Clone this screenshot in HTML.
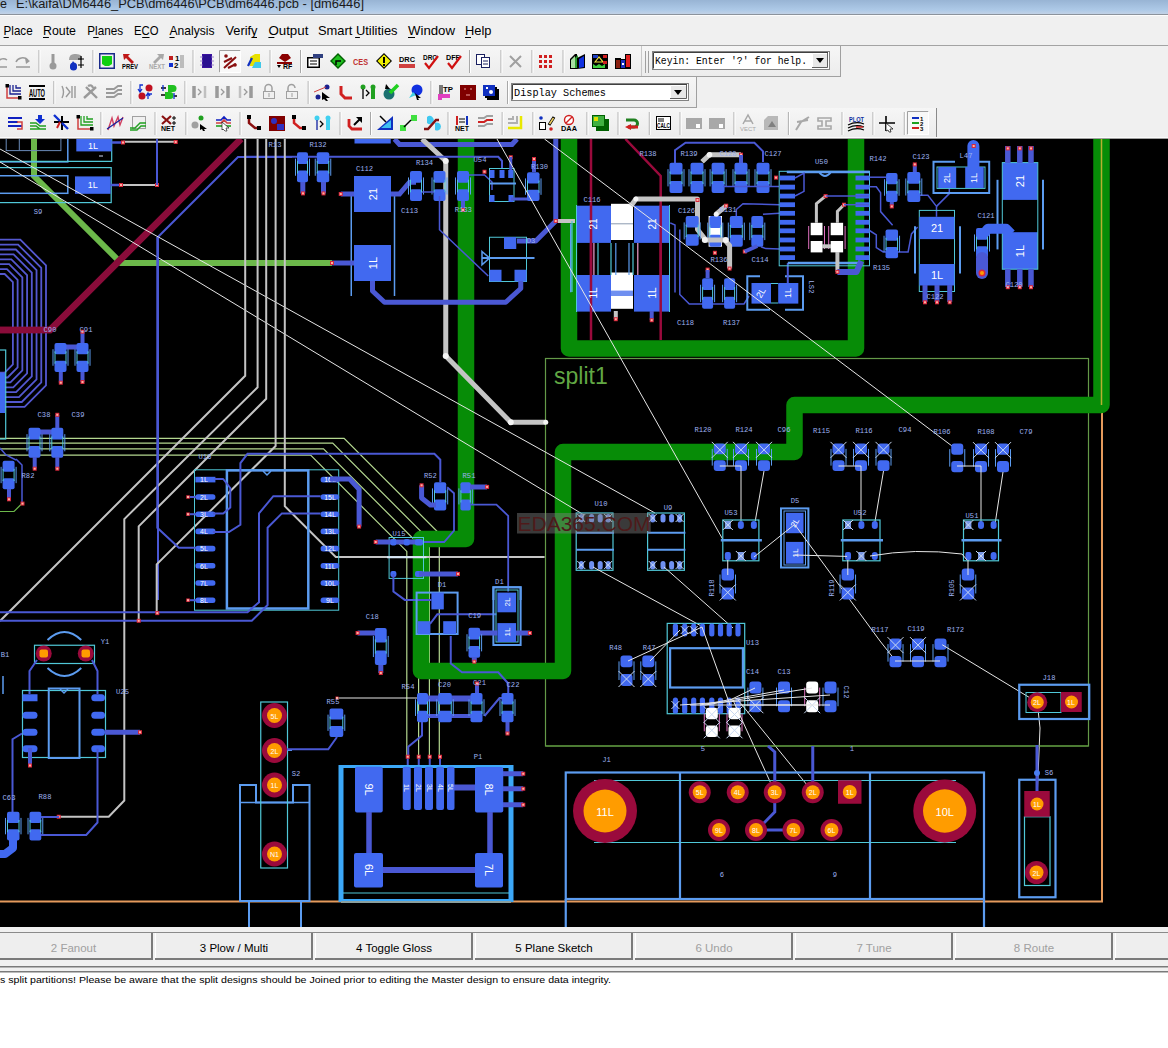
<!DOCTYPE html><html><head><meta charset="utf-8"><style>html,body{margin:0;padding:0;background:#fff;overflow:hidden}svg{display:block}</style></head><body>
<svg width="1168" height="1048" viewBox="0 0 1168 1048">
<defs><linearGradient id="tg" x1="0" y1="0" x2="0" y2="1"><stop offset="0" stop-color="#98b4d4"/><stop offset="0.7" stop-color="#adc9e7"/><stop offset="1" stop-color="#c2d2e6"/></linearGradient><linearGradient id="tb" x1="0" y1="0" x2="0" y2="1"><stop offset="0" stop-color="#f6f6f6"/><stop offset="1" stop-color="#ececec"/></linearGradient></defs>
<rect x="0" y="0" width="1168" height="14" fill="url(#tg)"/>
<rect x="0" y="14" width="1168" height="1" fill="#8c939c"/>
<rect x="0" y="15" width="1168" height="1" fill="#fdfdfd"/>
<text x="0" y="7.5" font-family='"Liberation Sans", sans-serif' font-size="12.5" fill="#1a1a1a">e</text>
<text x="16" y="7.5" font-family='"Liberation Sans", sans-serif' font-size="12.5" fill="#1a1a1a" textLength="348" lengthAdjust="spacingAndGlyphs">E:\kaifa\DM6446_PCB\dm6446\PCB\dm6446.pcb - [dm6446]</text>
<rect x="0" y="16" width="1168" height="29" fill="#f0f0f0"/>
<rect x="0" y="45" width="1168" height="1" fill="#a3a3a3"/>
<text x="3.6" y="35.3" font-family='"Liberation Sans", sans-serif' font-size="13" fill="#000" textLength="29" lengthAdjust="spacingAndGlyphs">Place</text>
<rect x="3.6" y="37" width="5.2" height="1" fill="#000"/>
<text x="43" y="35.3" font-family='"Liberation Sans", sans-serif' font-size="13" fill="#000" textLength="33" lengthAdjust="spacingAndGlyphs">Route</text>
<rect x="43.0" y="37" width="5.9" height="1" fill="#000"/>
<text x="87.3" y="35.3" font-family='"Liberation Sans", sans-serif' font-size="13" fill="#000" textLength="35.7" lengthAdjust="spacingAndGlyphs">Planes</text>
<rect x="93.2" y="37" width="5.4" height="1" fill="#000"/>
<text x="134" y="35.3" font-family='"Liberation Sans", sans-serif' font-size="13" fill="#000" textLength="24.5" lengthAdjust="spacingAndGlyphs">ECO</text>
<rect x="142.2" y="37" width="7.3" height="1" fill="#000"/>
<text x="169.5" y="35.3" font-family='"Liberation Sans", sans-serif' font-size="13" fill="#000" textLength="45" lengthAdjust="spacingAndGlyphs">Analysis</text>
<rect x="169.5" y="37" width="5.1" height="1" fill="#000"/>
<text x="225.5" y="35.3" font-family='"Liberation Sans", sans-serif' font-size="13" fill="#000" textLength="32" lengthAdjust="spacingAndGlyphs">Verify</text>
<rect x="252.2" y="37" width="4.8" height="1" fill="#000"/>
<text x="268.4" y="35.3" font-family='"Liberation Sans", sans-serif' font-size="13" fill="#000" textLength="40" lengthAdjust="spacingAndGlyphs">Output</text>
<rect x="268.4" y="37" width="6.0" height="1" fill="#000"/>
<text x="318" y="35.3" font-family='"Liberation Sans", sans-serif' font-size="13" fill="#000" textLength="79.5" lengthAdjust="spacingAndGlyphs">Smart Utilities</text>
<rect x="355.1" y="37" width="4.8" height="1" fill="#000"/>
<text x="408" y="35.3" font-family='"Liberation Sans", sans-serif' font-size="13" fill="#000" textLength="47" lengthAdjust="spacingAndGlyphs">Window</text>
<rect x="408.0" y="37" width="7.0" height="1" fill="#000"/>
<text x="465" y="35.3" font-family='"Liberation Sans", sans-serif' font-size="13" fill="#000" textLength="26.5" lengthAdjust="spacingAndGlyphs">Help</text>
<rect x="465.0" y="37" width="6.0" height="1" fill="#000"/>
<rect x="0" y="46" width="1168" height="93" fill="#f0f0f0"/>
<rect x="0" y="46" width="641" height="30" fill="url(#tb)"/>
<rect x="642" y="46" width="199" height="30" fill="url(#tb)"/>
<rect x="0" y="77" width="697" height="30" fill="url(#tb)"/>
<rect x="0" y="108" width="936" height="29" fill="url(#tb)"/>
<rect x="0" y="76" width="841" height="1" fill="#a0a0a0"/>
<rect x="641" y="46" width="1" height="30" fill="#c8c8c8"/><rect x="840" y="46" width="1" height="30" fill="#a0a0a0"/>
<rect x="0" y="107" width="697" height="1" fill="#a0a0a0"/>
<rect x="696" y="77" width="1" height="30" fill="#a0a0a0"/>
<rect x="936" y="108" width="1" height="29" fill="#8a8a8a"/>
<rect x="0" y="137" width="1168" height="1" fill="#fbfbfb"/><rect x="0" y="138" width="1168" height="1" fill="#a0a0a0"/>
<path d="M-2 62 A6 6 0 0 1 7 60" fill="none" stroke="#9a9a9a" stroke-width="1.5"/>
<path d="M0 67 H7" fill="none" stroke="#9a9a9a" stroke-width="1.5"/>
<path d="M16 62 A7 6 0 0 1 28 60" fill="none" stroke="#9a9a9a" stroke-width="1.5"/>
<path d="M25 58 L30 61 L26 64Z" fill="#9a9a9a"/>
<path d="M16 67 H30" fill="none" stroke="#9a9a9a" stroke-width="1.5"/>
<rect x="38.5" y="50" width="1" height="23" fill="#a8a8a8"/><rect x="39.5" y="50" width="1" height="23" fill="#ffffff"/>
<path d="M53 54 V63" fill="none" stroke="#9a9a9a" stroke-width="3"/>
<circle cx="53" cy="66" r="3.5" fill="#9a9a9a"/>
<path d="M69 60 Q69 53 76 54 Q83 54 82 60Z" fill="#a0a0a0"/>
<path d="M73 61 L70 67 A3.5 3.5 0 0 0 77 67 Z" fill="#1030c0"/>
<circle cx="73.5" cy="66" r="3.5" fill="#1030c0"/>
<path d="M78 59 H84 M81 56 V62 M78 65 H84 M81 62 V68" fill="none" stroke="#000" stroke-width="1.2"/>
<rect x="92.5" y="50" width="1" height="23" fill="#a8a8a8"/><rect x="93.5" y="50" width="1" height="23" fill="#ffffff"/>
<rect x="99" y="53" width="16" height="16" fill="#1a2a8a"/>
<rect x="100.5" y="54.5" width="13" height="13" fill="#f0f0f0"/>
<path d="M102 56 H112 V64 L109 66 H105 L102 64Z" fill="#10d010"/>
<path d="M123 54 L130 54 L128 56 L134 62 L132 64 L126 58 L124 60Z" fill="#c01818"/>
<text x="122" y="69" font-family='"Liberation Sans", sans-serif' font-size="6.5" fill="#000" text-anchor="start" font-weight="bold" textLength="16" lengthAdjust="spacingAndGlyphs">PREV</text>
<path d="M164 54 L157 54 L159 56 L153 62 L155 64 L161 58 L163 60Z" fill="#a8a8a8"/>
<text x="149" y="69" font-family='"Liberation Sans", sans-serif' font-size="6.5" fill="#a8a8a8" text-anchor="start" font-weight="bold" textLength="16" lengthAdjust="spacingAndGlyphs">NEXT</text>
<rect x="169" y="56" width="4" height="4" fill="#c02020"/>
<rect x="169" y="63" width="4" height="4" fill="#1030d0"/>
<text x="175" y="61" font-family='"Liberation Sans", sans-serif' font-size="8" fill="#000" text-anchor="start" font-weight="bold">1</text>
<text x="174" y="68" font-family='"Liberation Sans", sans-serif' font-size="8" fill="#000" text-anchor="start" font-weight="bold">2</text>
<path d="M181 55 V68 M183 55 V68" fill="none" stroke="#888" stroke-width="1"/>
<rect x="192.6" y="50" width="1" height="23" fill="#a8a8a8"/><rect x="193.6" y="50" width="1" height="23" fill="#ffffff"/>
<rect x="202" y="54" width="10" height="14" fill="#3a10a0"/>
<path d="M200 57 H214 M200 61 H214 M200 65 H214" fill="none" stroke="#8870c0" stroke-width="0.8"/>
<rect x="203" y="55" width="8" height="12" fill="#2a1090"/>
<rect x="219" y="50" width="22" height="23" fill="#f8f8f8"/>
<path d="M219.5 72.5 V50.5 H240.5" fill="none" stroke="#a0a0a0" stroke-width="1"/>
<path d="M219.5 72.5 H240.5 V50.5" fill="none" stroke="#ffffff" stroke-width="1"/>
<path d="M224 68 L236 57 M224 62 L232 58 M228 68 L236 64" fill="none" stroke="#8a1010" stroke-width="2"/>
<circle cx="226" cy="56" r="1.8" fill="#8a1010"/>
<circle cx="235" cy="65" r="1.8" fill="#8a1010"/>
<path d="M250 57 L255 54 H260 V63 L255 66 H250Z" fill="#e8e000"/>
<path d="M255 62 L261 62 L261 68 L252 68Z" fill="#40c8e8"/>
<path d="M248 66 L252 58" fill="none" stroke="#1030c0" stroke-width="2.2"/>
<rect x="269.6" y="50" width="1" height="23" fill="#a8a8a8"/><rect x="270.6" y="50" width="1" height="23" fill="#ffffff"/>
<path d="M279 58 L282 54 H288 L291 58 L285 62Z" fill="#8a0000"/>
<path d="M277 63 H292" fill="none" stroke="#8a0000" stroke-width="2"/>
<text x="283" y="69" font-family='"Liberation Sans", sans-serif' font-size="7" fill="#000" text-anchor="start" font-weight="bold">RF</text>
<path d="M277 65 L281 65 L279 68Z" fill="#000"/>
<rect x="300" y="50" width="1" height="23" fill="#a8a8a8"/><rect x="301" y="50" width="1" height="23" fill="#ffffff"/>
<rect x="307" y="57" width="13" height="11" fill="#000"/>
<rect x="308.5" y="58.5" width="10" height="8" fill="#fff"/>
<path d="M310 61 H317 M310 64 H317" fill="none" stroke="#000" stroke-width="1"/>
<rect x="313" y="54" width="10" height="4" fill="#304080"/>
<path d="M338 53 L346 61 L338 69 L330 61Z" fill="#006000"/>
<path d="M338 55 L344 61 L338 67 L332 61Z" fill="#20c020"/>
<path d="M336 65 V61 H341" fill="none" stroke="#000" stroke-width="1.5"/>
<text x="353" y="65" font-family='"Liberation Sans", sans-serif' font-size="9" fill="#c03030" text-anchor="start" font-weight="bold" textLength="15" lengthAdjust="spacingAndGlyphs">CES</text>
<path d="M384 53 L392 61 L384 69 L376 61Z" fill="#000"/>
<path d="M384 54.5 L390.5 61 L384 67.5 L377.5 61Z" fill="#f0f000"/>
<rect x="383" y="57" width="2" height="6" fill="#000"/>
<rect x="383" y="64" width="2" height="2" fill="#000"/>
<text x="399" y="62" font-family='"Liberation Sans", sans-serif' font-size="8" fill="#000" text-anchor="start" font-weight="bold" textLength="16" lengthAdjust="spacingAndGlyphs">DRC</text>
<rect x="399" y="64" width="16" height="4" fill="#d04040"/>
<text x="423" y="60" font-family='"Liberation Sans", sans-serif' font-size="6.5" fill="#000" text-anchor="start" font-weight="bold" textLength="14" lengthAdjust="spacingAndGlyphs">DRC</text>
<path d="M425 63 L429 68 L438 56" fill="none" stroke="#d01010" stroke-width="2.2"/>
<text x="446" y="60" font-family='"Liberation Sans", sans-serif' font-size="6.5" fill="#000" text-anchor="start" font-weight="bold" textLength="14" lengthAdjust="spacingAndGlyphs">DFF</text>
<path d="M448 63 L452 68 L461 56" fill="none" stroke="#d01010" stroke-width="2.2"/>
<rect x="469" y="50" width="1" height="23" fill="#a8a8a8"/><rect x="470" y="50" width="1" height="23" fill="#ffffff"/>
<rect x="476" y="54" width="9" height="11" fill="#1a2060"/>
<rect x="477" y="55" width="7" height="9" fill="#fff"/>
<rect x="481" y="57" width="9" height="11" fill="#1a2060"/>
<rect x="482" y="58" width="7" height="9" fill="#fff"/>
<path d="M483 61 H488 M483 64 H488" fill="none" stroke="#1a2060" stroke-width="1"/>
<rect x="500.5" y="50" width="1" height="23" fill="#a8a8a8"/><rect x="501.5" y="50" width="1" height="23" fill="#ffffff"/>
<path d="M510 56 L521 67 M521 56 L510 67" fill="none" stroke="#a0a0a0" stroke-width="2"/>
<rect x="531.5" y="50" width="1" height="23" fill="#a8a8a8"/><rect x="532.5" y="50" width="1" height="23" fill="#ffffff"/>
<rect x="539" y="55" width="3" height="3" fill="#d02020"/>
<rect x="539" y="60" width="3" height="3" fill="#d02020"/>
<rect x="539" y="65" width="3" height="3" fill="#d02020"/>
<rect x="544" y="55" width="3" height="3" fill="#d02020"/>
<rect x="544" y="60" width="3" height="3" fill="#d02020"/>
<rect x="544" y="65" width="3" height="3" fill="#d02020"/>
<rect x="549" y="55" width="3" height="3" fill="#d02020"/>
<rect x="549" y="60" width="3" height="3" fill="#d02020"/>
<rect x="549" y="65" width="3" height="3" fill="#d02020"/>
<rect x="562.6" y="50" width="1" height="23" fill="#a8a8a8"/><rect x="563.6" y="50" width="1" height="23" fill="#ffffff"/>
<path d="M570 59 L575 54 H577 V69 H570Z" fill="#000"/>
<path d="M571 60 L575 56 V68 H571Z" fill="#a8e0a0"/>
<path d="M575 58 L578 55 V68 H575Z" fill="#30a030"/>
<path d="M577 58 L585 54 V68 L577 69Z" fill="#000"/>
<path d="M579 59 L584 56 V67 L579 68Z" fill="#1030e0"/>
<rect x="592" y="54" width="16" height="15" fill="#000"/>
<path d="M593 64 L596 66 L599 64 L602 66 L605 64 V68 H593Z" fill="#40d040"/>
<path d="M595 62 L599 57 L603 62 Z" fill="none" stroke="#f0e040" stroke-width="1.2"/>
<rect x="603" y="55" width="4" height="3" fill="#d02020"/>
<rect x="603" y="61" width="4" height="3" fill="#d02020"/>
<rect x="593" y="55" width="5" height="3" fill="#2040c0"/>
<rect x="615" y="58" width="6" height="11" fill="#000"/>
<rect x="616" y="60" width="4" height="8" fill="#8a2010"/>
<rect x="620" y="59" width="6" height="10" fill="#000"/>
<rect x="621" y="60" width="4" height="8" fill="#1a30c0"/>
<rect x="625" y="54" width="6" height="15" fill="#000"/>
<rect x="626" y="55" width="4" height="12" fill="#e02020"/>
<rect x="622" y="63" width="2" height="2" fill="#fff"/>
<path d="M645.5 51 V73 M648.5 51 V73" fill="none" stroke="#a0a0a0" stroke-width="1"/>
<rect x="652" y="51" width="178" height="19" fill="#828282"/>
<rect x="653" y="52" width="176" height="17" fill="#ffffff"/>
<path d="M653.5 68.5 V52.5 H828" fill="none" stroke="#404040" stroke-width="1"/>
<rect x="812" y="53" width="16" height="15" fill="#e8e8e8"/>
<path d="M812.5 67.5 V53.5 H827.5" fill="none" stroke="#fff" stroke-width="1"/>
<path d="M812 67.5 H827.5 V53" fill="none" stroke="#606060" stroke-width="1"/>
<path d="M816 58 H824 L820 63Z" fill="#000"/>
<text x="655" y="64" font-family='"Liberation Mono", monospace' font-size="11" fill="#000" text-anchor="start" textLength="152" lengthAdjust="spacingAndGlyphs">Keyin: Enter '?' for help.</text>
<path d="M7 85 V98 H20" fill="none" stroke="#d04040" stroke-width="1.5"/>
<rect x="5.5" y="84" width="3.5" height="3.5" fill="#000"/>
<rect x="18" y="96" width="3.5" height="3.5" fill="#000"/>
<path d="M10 85 V94 H21 M13 85 V91 H21 M16 85 V88 H21" fill="none" stroke="#1a2090" stroke-width="1.3"/>
<rect x="29" y="85" width="16" height="2" fill="#000"/>
<rect x="29" y="98" width="16" height="2" fill="#000"/>
<text x="29" y="97" font-family='"Liberation Sans", sans-serif' font-size="10" fill="#000" text-anchor="start" font-weight="bold" textLength="16" lengthAdjust="spacingAndGlyphs">AUTO</text>
<rect x="53.4" y="81" width="1" height="23" fill="#a8a8a8"/><rect x="54.4" y="81" width="1" height="23" fill="#ffffff"/>
<path d="M62 86 Q65 92 62 98 M66 87 L70 92 L66 97 M72 86 V98 M75 86 V98" fill="none" stroke="#9a9a9a" stroke-width="1.4"/>
<path d="M84 98 L96 87 M86 87 L97 98 M88 86 Q92 84 93 88" fill="none" stroke="#9a9a9a" stroke-width="2.4"/>
<path d="M106 89 H114 L118 86 H122 M106 93 H114 L118 90 H122 M106 97 H114 L118 94 H122" fill="none" stroke="#9a9a9a" stroke-width="2"/>
<rect x="130.5" y="81" width="1" height="23" fill="#a8a8a8"/><rect x="131.5" y="81" width="1" height="23" fill="#ffffff"/>
<circle cx="149" cy="88" r="3.5" fill="#c01020"/>
<circle cx="142" cy="96" r="3.5" fill="#c01020"/>
<path d="M143 85 H140 V91 M138 89 L140 92 L142 89 M148 99 V94 H152 M146 96 L148 93 L150 96" fill="none" stroke="#1030d0" stroke-width="1.3"/>
<path d="M168 85 H173 A3.5 3.5 0 0 1 173 92 H168Z" fill="#20c020"/>
<path d="M165 92 H170 A3.5 3.5 0 0 1 170 99 H165Z" fill="#20c020"/>
<path d="M161 88 H166 M161 95 H165 M174 96 H177" fill="none" stroke="#000" stroke-width="1.3"/>
<path d="M163 85 V91 M174 99 V93" fill="none" stroke="#1030d0" stroke-width="1.3"/>
<rect x="184.5" y="81" width="1" height="23" fill="#a8a8a8"/><rect x="185.5" y="81" width="1" height="23" fill="#ffffff"/>
<path d="M194 86 V98" fill="none" stroke="#9a9a9a" stroke-width="3.5"/>
<path d="M205 86 V98" fill="none" stroke="#c0c0c0" stroke-width="2.5"/>
<path d="M198 89 L201 92 L198 95" fill="none" stroke="#9a9a9a" stroke-width="1.3"/>
<path d="M217 86 V98" fill="none" stroke="#9a9a9a" stroke-width="3.5"/>
<path d="M228 86 V98" fill="none" stroke="#9a9a9a" stroke-width="3.5"/>
<path d="M221 89 L224 92 L221 95" fill="none" stroke="#9a9a9a" stroke-width="1.3"/>
<path d="M240 86 V98" fill="none" stroke="#c0c0c0" stroke-width="2.5"/>
<path d="M251 86 V98" fill="none" stroke="#9a9a9a" stroke-width="3.5"/>
<path d="M244 89 L247 92 L244 95" fill="none" stroke="#9a9a9a" stroke-width="1.3"/>
<path d="M265 91 V88 A3.5 3.5 0 0 1 272 88 V91" fill="none" stroke="#a0a0a0" stroke-width="1.5"/>
<rect x="263" y="91" width="12" height="8" fill="#a0a0a0"/>
<rect x="264" y="92" width="10" height="6" fill="#f0f0f0"/>
<rect x="268.5" y="93" width="1" height="4" fill="#a0a0a0"/>
<path d="M288 91 V88 A3.5 3.5 0 0 1 295 88" fill="none" stroke="#a0a0a0" stroke-width="1.5"/>
<rect x="286" y="91" width="12" height="8" fill="#a0a0a0"/>
<rect x="287" y="92" width="10" height="6" fill="#f0f0f0"/>
<rect x="291.5" y="93" width="1" height="4" fill="#a0a0a0"/>
<rect x="307.7" y="81" width="1" height="23" fill="#a8a8a8"/><rect x="308.7" y="81" width="1" height="23" fill="#ffffff"/>
<circle cx="327" cy="87" r="2.5" fill="#1a2090"/>
<circle cx="318" cy="97" r="2.5" fill="#1a2090"/>
<path d="M314 92 L326 87" fill="none" stroke="#d04040" stroke-width="1"/>
<path d="M322 92 L330 98 L326 98 L328 101 L326 101 L324 99 L322 100Z" fill="#000"/>
<path d="M341 86 V94 L345 98 H352" fill="none" stroke="#d02020" stroke-width="3"/>
<circle cx="363" cy="87" r="2.5" fill="#20a020"/>
<path d="M363 89 V99 M373 89 V99 M366 90 L369 93 L366 96" fill="none" stroke="#000" stroke-width="1.3"/>
<circle cx="373" cy="87" r="2.5" fill="#20a020"/>
<rect x="371" y="89" width="4" height="10" fill="#20a020"/>
<circle cx="389" cy="94" r="5.5" fill="#1a7070"/>
<path d="M390 93 L398 85" fill="none" stroke="#20d020" stroke-width="3.5"/>
<path d="M386 84 L390 89 L385 89Z" fill="#000"/>
<circle cx="417" cy="90" r="5.5" fill="#1030e0"/>
<path d="M409 98 L413 92 L416 95Z" fill="#40d0e0"/>
<path d="M415 93 L421 98 L418 98 L419 100 L417 100Z" fill="#000"/>
<rect x="430.5" y="81" width="1" height="23" fill="#a8a8a8"/><rect x="431.5" y="81" width="1" height="23" fill="#ffffff"/>
<path d="M438 94 H450 V98 H442 V100 H438Z" fill="#e040c0"/>
<path d="M440 85 V94 M442 85 V94" fill="none" stroke="#000" stroke-width="1"/>
<text x="443" y="92" font-family='"Liberation Sans", sans-serif' font-size="8" fill="#000" text-anchor="start" font-weight="bold" textLength="10" lengthAdjust="spacingAndGlyphs">TP</text>
<rect x="460" y="85" width="16" height="15" fill="#800000"/>
<path d="M464 89 h2 M470 89 h2 M466 95 h4" fill="none" stroke="#f0a0a0" stroke-width="1"/>
<rect x="487" y="89" width="12" height="11" fill="#000"/>
<rect x="485" y="87" width="12" height="11" fill="#000"/>
<rect x="483" y="85" width="12" height="11" fill="#1030c0"/>
<circle cx="491" cy="92" r="2" fill="#fff"/>
<rect x="486" y="87" width="2" height="2" fill="#fff"/>
<rect x="507" y="81" width="1" height="23" fill="#a8a8a8"/><rect x="508" y="81" width="1" height="23" fill="#ffffff"/>
<rect x="511" y="83" width="178" height="18" fill="#828282"/>
<rect x="512" y="84" width="176" height="16" fill="#ffffff"/>
<path d="M512.5 99.5 V84.5 H687" fill="none" stroke="#404040" stroke-width="1"/>
<rect x="670" y="85" width="17" height="14" fill="#e8e8e8"/>
<path d="M670.5 98.5 V85.5 H686.5" fill="none" stroke="#fff" stroke-width="1"/>
<path d="M670 98.5 H686.5 V85" fill="none" stroke="#606060" stroke-width="1"/>
<path d="M674 90 H682 L678 95Z" fill="#000"/>
<text x="514" y="96" font-family='"Liberation Mono", monospace' font-size="11" fill="#000" text-anchor="start" textLength="92" lengthAdjust="spacingAndGlyphs">Display Schemes</text>
<path d="M8 118 H22 M8 122 H18 M8 126 H22" fill="none" stroke="#1020c0" stroke-width="2.2"/>
<path d="M17 122 H22 V129 H17" fill="none" stroke="#d04040" stroke-width="1.5"/>
<path d="M30 123 L36 123 L40 126 H46 M30 126 L36 126 L40 129 H46 M30 129 H46" fill="none" stroke="#20a020" stroke-width="1.5"/>
<path d="M38 115 H42 V119 H45 L40 124 L35 119 H38Z" fill="#1030d0"/>
<path d="M54 122 H69" fill="none" stroke="#000" stroke-width="2"/>
<path d="M62 116 V130" fill="none" stroke="#000" stroke-width="2"/>
<path d="M54 115 L60 121 M68 129 L62 123" fill="none" stroke="#1030d0" stroke-width="2.4"/>
<path d="M60 122 L57 128" fill="none" stroke="#d02020" stroke-width="2"/>
<path d="M78 116 V129 H92" fill="none" stroke="#d04040" stroke-width="1.5"/>
<rect x="76.5" y="115" width="3.5" height="3.5" fill="#000"/>
<rect x="90" y="127" width="3.5" height="3.5" fill="#000"/>
<path d="M81 116 V125 H93 M84 116 V122 H93 M87 116 V119 H93" fill="none" stroke="#20a020" stroke-width="1.3"/>
<rect x="100.5" y="112" width="1" height="23" fill="#a8a8a8"/><rect x="101.5" y="112" width="1" height="23" fill="#ffffff"/>
<path d="M108 130 L112 118 L114 126 L118 117 L120 125 L123 117" fill="none" stroke="#d04060" stroke-width="1.4"/>
<path d="M107 129 L123 118" fill="none" stroke="#1020a0" stroke-width="1.2"/>
<rect x="132" y="116" width="14" height="13" fill="#a0a0a0"/>
<rect x="133" y="117" width="12" height="11" fill="#f0f0f0"/>
<path d="M130 128 H135 L140 123 H146 M130 130 H137 L141 126 H146" fill="none" stroke="#20a020" stroke-width="1.4"/>
<rect x="154.6" y="112" width="1" height="23" fill="#a8a8a8"/><rect x="155.6" y="112" width="1" height="23" fill="#ffffff"/>
<path d="M162 116 L171 124 M171 116 L162 124" fill="none" stroke="#8a1010" stroke-width="2.2"/>
<path d="M174 116 V120 M172 118 H176 M174 121 V125 M172 123 H176" fill="none" stroke="#000" stroke-width="1"/>
<text x="161" y="131" font-family='"Liberation Sans", sans-serif' font-size="6.5" fill="#000" text-anchor="start" font-weight="bold" textLength="14" lengthAdjust="spacingAndGlyphs">NET</text>
<rect x="185.5" y="112" width="1" height="23" fill="#a8a8a8"/><rect x="186.5" y="112" width="1" height="23" fill="#ffffff"/>
<circle cx="195" cy="125" r="3.5" fill="#a0a0a0"/>
<circle cx="201" cy="118" r="2.5" fill="#20a020"/>
<path d="M200 124 L207 129 L204 129 L205 131 L203 131 L202 129 L200 130Z" fill="#000"/>
<path d="M216 120 H221 L224 117 L227 120 H231" fill="none" stroke="#1020c0" stroke-width="1.6"/>
<path d="M216 123 H221 L224 120 L227 123 H231" fill="none" stroke="#d04040" stroke-width="1.6"/>
<path d="M216 126 H231" fill="none" stroke="#20a020" stroke-width="1.6"/>
<path d="M222 122 L229 128 L226 128 L227 131 L225 131 L223 129 L222 130Z" fill="#fff" stroke="#000" stroke-width="0.6"/>
<rect x="239.6" y="112" width="1" height="23" fill="#a8a8a8"/><rect x="240.6" y="112" width="1" height="23" fill="#ffffff"/>
<path d="M249 117 V123 L255 128 H259" fill="none" stroke="#8a1010" stroke-width="2.5"/>
<rect x="247" y="115" width="4" height="4" fill="#000"/>
<rect x="257" y="126" width="4" height="4" fill="#000"/>
<rect x="269" y="116" width="16" height="15" fill="#800000"/>
<circle cx="274" cy="121" r="3" fill="#3030c0"/>
<rect x="277" y="124" width="7" height="6" fill="#3030c0"/>
<path d="M294 117 V123 L300 128 H304" fill="none" stroke="#d02020" stroke-width="2.5"/>
<rect x="292" y="115" width="4" height="4" fill="#000"/>
<rect x="302" y="126" width="4" height="4" fill="#000"/>
<circle cx="317" cy="118" r="2.5" fill="#40d0f0"/>
<path d="M317 120 V130" fill="none" stroke="#1020a0" stroke-width="1.3"/>
<path d="M320 121 L323 124 L320 127" fill="none" stroke="#000" stroke-width="1.3"/>
<circle cx="328" cy="118" r="2.5" fill="#40d0f0"/>
<rect x="326" y="120" width="4" height="10" fill="#40d0f0"/>
<rect x="339.6" y="112" width="1" height="23" fill="#a8a8a8"/><rect x="340.6" y="112" width="1" height="23" fill="#ffffff"/>
<path d="M349 119 V126 L352 129 H362" fill="none" stroke="#d02020" stroke-width="2.8"/>
<path d="M354 125 L361 118" fill="none" stroke="#000" stroke-width="2"/>
<path d="M356 117 H362 V123Z" fill="#000"/>
<rect x="370" y="112" width="1" height="23" fill="#a8a8a8"/><rect x="371" y="112" width="1" height="23" fill="#ffffff"/>
<path d="M377 130 L393 116 V130Z" fill="#1030c0"/>
<path d="M381 128 L391 120 V128Z" fill="#40c0f0"/>
<path d="M380 116 L386 122" fill="none" stroke="#000" stroke-width="1.5"/>
<rect x="411" y="115" width="6" height="6" fill="#40e040"/>
<rect x="400" y="125" width="6" height="6" fill="#40e040"/>
<path d="M404 127 L411 120" fill="none" stroke="#000" stroke-width="1.5"/>
<path d="M427 117 A4 4 0 1 1 427 123Z" fill="#40c8f0"/>
<path d="M435 123 A4 4 0 1 1 435 130Z" fill="#40c8f0"/>
<path d="M424 129 H428 L436 120 H439" fill="none" stroke="#801010" stroke-width="2.5"/>
<rect x="447.6" y="112" width="1" height="23" fill="#a8a8a8"/><rect x="448.6" y="112" width="1" height="23" fill="#ffffff"/>
<rect x="456" y="116" width="2" height="9" fill="#d02020"/>
<rect x="466" y="116" width="2" height="9" fill="#1030c0"/>
<path d="M459 119 H465 M459 122 H465" fill="none" stroke="#000" stroke-width="1.2"/>
<text x="455" y="131" font-family='"Liberation Sans", sans-serif' font-size="6.5" fill="#000" text-anchor="start" font-weight="bold" textLength="14" lengthAdjust="spacingAndGlyphs">NET</text>
<path d="M478 118 H484 L487 116 H493 M478 122 H484 L487 120 H493 M478 126 H484 L487 124 H493" fill="none" stroke="#a0a0a0" stroke-width="2"/>
<path d="M478 122 H484 L487 120 H493" fill="none" stroke="#d02020" stroke-width="2"/>
<rect x="501.7" y="112" width="1" height="23" fill="#a8a8a8"/><rect x="502.7" y="112" width="1" height="23" fill="#ffffff"/>
<path d="M508 119 H513 V116 M508 123 H517 V116 M508 128 H521 V116" fill="none" stroke="#b0b0b0" stroke-width="2"/>
<path d="M508 128 H521 V116" fill="none" stroke="#e8e800" stroke-width="2.5"/>
<rect x="532.5" y="112" width="1" height="23" fill="#a8a8a8"/><rect x="533.5" y="112" width="1" height="23" fill="#ffffff"/>
<circle cx="541" cy="118" r="1.8" fill="#1030c0"/>
<rect x="539" y="122" width="7" height="8" fill="#000"/>
<rect x="540" y="123" width="5" height="6" fill="#fff"/>
<path d="M549 125 L554 117" fill="none" stroke="#000" stroke-width="3"/>
<path d="M549.5 124 L553.5 118" fill="none" stroke="#f0d060" stroke-width="1.5"/>
<circle cx="551" cy="129" r="1.8" fill="#d02020"/>
<circle cx="569" cy="120" r="4.5" fill="#fff"/>
<path d="M569 120 m-4.5 0 a4.5 4.5 0 1 0 9 0 a4.5 4.5 0 1 0 -9 0 M566 123 L572 117" fill="none" stroke="#d02020" stroke-width="1.4"/>
<text x="561" y="131" font-family='"Liberation Sans", sans-serif' font-size="6.5" fill="#000" text-anchor="start" font-weight="bold" textLength="16" lengthAdjust="spacingAndGlyphs">DAA</text>
<rect x="586.5" y="112" width="1" height="23" fill="#a8a8a8"/><rect x="587.5" y="112" width="1" height="23" fill="#ffffff"/>
<rect x="596" y="119" width="13" height="12" fill="#006000"/>
<rect x="592" y="115" width="13" height="12" fill="#006000"/>
<rect x="593" y="116" width="11" height="10" fill="#40b040"/>
<rect x="594" y="117" width="4" height="4" fill="#e0e000"/>
<rect x="617.6" y="112" width="1" height="23" fill="#a8a8a8"/><rect x="618.6" y="112" width="1" height="23" fill="#ffffff"/>
<path d="M626 120 H634 A3.5 3.5 0 0 1 634 127 H628" fill="none" stroke="#208020" stroke-width="3"/>
<path d="M631 124 L625 127 L631 130Z" fill="#d02020"/>
<path d="M630 127 H638" fill="none" stroke="#d02020" stroke-width="3"/>
<rect x="648.8" y="112" width="1" height="23" fill="#a8a8a8"/><rect x="649.8" y="112" width="1" height="23" fill="#ffffff"/>
<rect x="656" y="116" width="15" height="14" fill="#000"/>
<rect x="657" y="117" width="13" height="12" fill="#fff"/>
<path d="M658 119 H664 M658 121 H664" fill="none" stroke="#000" stroke-width="1"/>
<text x="657" y="128" font-family='"Liberation Sans", sans-serif' font-size="6.5" fill="#000" text-anchor="start" font-weight="bold" textLength="13" lengthAdjust="spacingAndGlyphs">CALC</text>
<rect x="679.6" y="112" width="1" height="23" fill="#a8a8a8"/><rect x="680.6" y="112" width="1" height="23" fill="#ffffff"/>
<rect x="686" y="118" width="16" height="11" fill="#a8a8a8"/>
<rect x="696" y="124" width="4" height="4" fill="#fff"/>
<rect x="709" y="118" width="16" height="11" fill="#a8a8a8"/>
<rect x="719" y="124" width="4" height="4" fill="#fff"/>
<rect x="733.5" y="112" width="1" height="23" fill="#a8a8a8"/><rect x="734.5" y="112" width="1" height="23" fill="#ffffff"/>
<path d="M743 124 L748 115 L753 124 M745 121 H751" fill="none" stroke="#a8a8a8" stroke-width="1.5"/>
<text x="740" y="131" font-family='"Liberation Sans", sans-serif' font-size="6" fill="#a8a8a8" text-anchor="start" textLength="16" lengthAdjust="spacingAndGlyphs">VECT</text>
<path d="M764 120 L768 116 H778 V130 H764Z" fill="#b8b8b8"/>
<path d="M768 127 L772 121 L776 127Z" fill="#808080"/>
<rect x="787.9" y="112" width="1" height="23" fill="#a8a8a8"/><rect x="788.9" y="112" width="1" height="23" fill="#ffffff"/>
<path d="M796 130 L801 122 L809 117 M797 122 L808 120" fill="none" stroke="#a8a8a8" stroke-width="2"/>
<path d="M818 118 H831 V121 H826 V126 H831 V129 H818 V126 H822 V121 H818Z" fill="none" stroke="#a8a8a8" stroke-width="1.6"/>
<rect x="841.6" y="112" width="1" height="23" fill="#a8a8a8"/><rect x="842.6" y="112" width="1" height="23" fill="#ffffff"/>
<text x="849" y="122" font-family='"Liberation Sans", sans-serif' font-size="7" fill="#1030a0" text-anchor="start" font-weight="bold" textLength="15" lengthAdjust="spacingAndGlyphs">PLOT</text>
<path d="M848 125 Q856 121 864 124 M848 128 Q856 124 864 127 M848 131 Q856 127 864 130" fill="none" stroke="#000" stroke-width="1.2"/>
<path d="M856 127 H863" fill="none" stroke="#d02020" stroke-width="1.5"/>
<rect x="872.5" y="112" width="1" height="23" fill="#a8a8a8"/><rect x="873.5" y="112" width="1" height="23" fill="#ffffff"/>
<path d="M879 123 H895 M886 116 V131" fill="none" stroke="#000" stroke-width="1.6"/>
<path d="M886 123 L893 129 L890 129 L891 132 L889 132 L888 130 L886 131Z" fill="#fff" stroke="#000" stroke-width="0.7"/>
<rect x="903.8" y="112" width="1" height="23" fill="#a8a8a8"/><rect x="904.8" y="112" width="1" height="23" fill="#ffffff"/>
<rect x="907" y="111" width="22" height="24" fill="#f8f8f8"/>
<path d="M907.5 134.5 V111.5 H928.5" fill="none" stroke="#a0a0a0" stroke-width="1"/>
<path d="M907.5 134.5 H928.5 V111.5" fill="none" stroke="#ffffff" stroke-width="1"/>
<path d="M912 118 H919" fill="none" stroke="#1030c0" stroke-width="2"/>
<path d="M912 123 H919" fill="none" stroke="#20a020" stroke-width="2"/>
<path d="M912 128 H919" fill="none" stroke="#d02020" stroke-width="2"/>
<text x="920" y="121" font-family='"Liberation Sans", sans-serif' font-size="6" fill="#000" text-anchor="start" font-weight="bold">1</text>
<text x="920" y="126" font-family='"Liberation Sans", sans-serif' font-size="6" fill="#000" text-anchor="start" font-weight="bold">2</text>
<text x="920" y="131" font-family='"Liberation Sans", sans-serif' font-size="6" fill="#000" text-anchor="start" font-weight="bold">3</text>
<rect x="0" y="139" width="1168" height="788" fill="#000"/>
<svg x="0" y="139" width="1168" height="788" viewBox="0 139 1168 788" overflow="hidden">
<path d="M0 438.3 L344.1 438.3 L439.3 533.5 L439.3 756" fill="none" stroke="#b4d890" stroke-width="1.2" stroke-linecap="butt" stroke-linejoin="miter"/>
<path d="M0 443.2 L332.7 443.2 L429.4 539.9 L429.4 756" fill="none" stroke="#b4d890" stroke-width="1.2" stroke-linecap="butt" stroke-linejoin="miter"/>
<path d="M0 448.9 L323.5 448.9 L418.6 544 L418.6 756" fill="none" stroke="#b4d890" stroke-width="1.2" stroke-linecap="butt" stroke-linejoin="miter"/>
<path d="M0 455.2 L310.6 455.2 L406.8 551.4 L406.8 756" fill="none" stroke="#b4d890" stroke-width="1.2" stroke-linecap="butt" stroke-linejoin="miter"/>
<rect x="545.5" y="358.5" width="543" height="387.5" fill="none" stroke="#649a48" stroke-width="1.2"/>
<text x="554" y="384" font-family='"Liberation Sans", sans-serif' font-size="23" fill="#62a844">split1</text>
<path d="M0 901.5 L1102 901.5 L1102 413" fill="none" stroke="#e49a5c" stroke-width="2" stroke-linecap="butt" stroke-linejoin="miter"/>
<path d="M569 139 L569 348.5 L856 348.5 L856 139" fill="none" stroke="#078c07" stroke-width="16.5" stroke-linecap="butt" stroke-linejoin="round"/>
<path d="M466 139 L466 539 L421 539 L421 671 L563 671 L563 452 L794.5 452 L794.5 405 L1101.5 405 L1101.5 139" fill="none" stroke="#078c07" stroke-width="16.5" stroke-linecap="butt" stroke-linejoin="round"/>
<path d="M1101.5 139 L1101.5 405" fill="none" stroke="#b8b030" stroke-width="1.5" stroke-linecap="butt" stroke-linejoin="miter"/>
<path d="M34 139 L34 176 L121 263 L332 263" fill="none" stroke="#6cb84a" stroke-width="6" stroke-linecap="butt" stroke-linejoin="miter"/>
<path d="M241 139 L50 330 L0 330" fill="none" stroke="#8a0c3a" stroke-width="6.5" stroke-linecap="butt" stroke-linejoin="miter"/>
<rect x="-5" y="130" width="72.8" height="31.9" fill="none" stroke="#5c9cf0" stroke-width="1.5"/>
<rect x="6.2" y="130" width="54.7" height="20.6" fill="none" stroke="#6a8ab8" stroke-width="1"/>
<path d="M19.3 139 L19.3 150.6" fill="none" stroke="#6a8ab8" stroke-width="1" stroke-linecap="butt" stroke-linejoin="miter"/>
<path d="M0 161.4 L111.7 161.4 L111.7 139" fill="none" stroke="#50c8d8" stroke-width="1.2" stroke-linecap="butt" stroke-linejoin="miter"/>
<rect x="-5" y="167.6" width="116.2" height="35" fill="none" stroke="#50c8d8" stroke-width="1.2"/>
<rect x="-5" y="175.75" width="72.8" height="17.55" fill="none" stroke="#5c9cf0" stroke-width="1.5"/>
<rect x="76.3" y="139" width="35.4" height="12.4" fill="#4169f0"/>
<text x="93" y="145.5" font-family='"Liberation Sans", sans-serif' font-size="9" fill="#ffffff" text-anchor="middle" dominant-baseline="central">1L</text>
<rect x="75" y="176.4" width="35.6" height="17.4" fill="#4169f0"/>
<text x="92.8" y="185.2" font-family='"Liberation Sans", sans-serif' font-size="9" fill="#ffffff" text-anchor="middle" dominant-baseline="central">1L</text>
<path d="M99 156 L103 156" fill="none" stroke="#cfd8f0" stroke-width="1" stroke-linecap="butt" stroke-linejoin="miter"/>
<path d="M111.7 142.5 L123 142.5" fill="none" stroke="#4a58d4" stroke-width="2.5" stroke-linecap="butt" stroke-linejoin="miter"/>
<path d="M123 141.8 L175.7 141.8" fill="none" stroke="#c4c4c4" stroke-width="2" stroke-linecap="butt" stroke-linejoin="miter"/>
<rect x="121" y="140.5" width="4" height="4" fill="#d8283c"/>
<rect x="122" y="141.5" width="2" height="2" fill="#ffb0a0"/>
<rect x="173.7" y="140" width="4" height="4" fill="#d8283c"/>
<rect x="174.7" y="141" width="2" height="2" fill="#ffb0a0"/>
<path d="M110.6 185 L121 185" fill="none" stroke="#4a58d4" stroke-width="2.5" stroke-linecap="butt" stroke-linejoin="miter"/>
<path d="M121 185 L157 185" fill="none" stroke="#c4c4c4" stroke-width="2" stroke-linecap="butt" stroke-linejoin="miter"/>
<rect x="119" y="183" width="4" height="4" fill="#d8283c"/>
<rect x="120" y="184" width="2" height="2" fill="#ffb0a0"/>
<rect x="155" y="183" width="4" height="4" fill="#d8283c"/>
<rect x="156" y="184" width="2" height="2" fill="#ffb0a0"/>
<path d="M157 139 L157 185" fill="none" stroke="#4a58d4" stroke-width="2" stroke-linecap="butt" stroke-linejoin="miter"/>
<path d="M0 239.7 L20.3 239.7 L46 265.4 L46 385.5 L24.6 406.9 L0 406.9" fill="none" stroke="#5458d0" stroke-width="1.8" stroke-linecap="butt" stroke-linejoin="miter"/>
<path d="M0 244.6 L18.07 244.6 L41.27 267.8 L41.27 382.5 L21.77 402 L0 402" fill="none" stroke="#5458d0" stroke-width="1.8" stroke-linecap="butt" stroke-linejoin="miter"/>
<path d="M0 249.5 L15.84 249.5 L36.54 270.2 L36.54 379.5 L18.94 397.1 L0 397.1" fill="none" stroke="#5458d0" stroke-width="1.8" stroke-linecap="butt" stroke-linejoin="miter"/>
<path d="M0 254.4 L13.61 254.4 L31.81 272.6 L31.81 376.5 L16.11 392.2 L0 392.2" fill="none" stroke="#5458d0" stroke-width="1.8" stroke-linecap="butt" stroke-linejoin="miter"/>
<path d="M0 259.3 L11.38 259.3 L27.08 275 L27.08 373.5 L13.28 387.3 L0 387.3" fill="none" stroke="#5458d0" stroke-width="1.8" stroke-linecap="butt" stroke-linejoin="miter"/>
<path d="M0 264.2 L9.15 264.2 L22.35 277.4 L22.35 370.5 L10.45 382.4 L0 382.4" fill="none" stroke="#5458d0" stroke-width="1.8" stroke-linecap="butt" stroke-linejoin="miter"/>
<path d="M0 269.1 L6.92 269.1 L17.62 279.8 L17.62 367.5 L7.62 377.5 L0 377.5" fill="none" stroke="#5458d0" stroke-width="1.8" stroke-linecap="butt" stroke-linejoin="miter"/>
<path d="M0 274 L4.69 274 L12.89 282.2 L12.89 364.5 L4.79 372.6 L0 372.6" fill="none" stroke="#5458d0" stroke-width="1.8" stroke-linecap="butt" stroke-linejoin="miter"/>
<path d="M292 157 L238 157 L158 237 L158 600" fill="none" stroke="#4a58d4" stroke-width="2" stroke-linecap="butt" stroke-linejoin="miter"/>
<path d="M241 139 L50 330 L0 330" fill="none" stroke="#8a0c3a" stroke-width="6.5" stroke-linecap="butt" stroke-linejoin="miter"/>
<rect x="-5" y="350" width="10.7" height="89" fill="none" stroke="#50c8d8" stroke-width="1.2"/>
<rect x="-2" y="373" width="7" height="40" fill="#4169f0"/>
<rect x="60" y="344.5" width="22" height="5" fill="#4a58d4"/>
<rect x="54.5" y="343" width="12" height="11.31" fill="#4169f0" rx="2"/>
<rect x="54.5" y="360.69" width="12" height="11.31" fill="#4169f0" rx="2"/>
<path d="M53 349.22 V365.78 M68 349.22 V365.78" stroke="#5c9cf0" stroke-width="1" fill="none"/>
<path d="M55 351.31 V363.69 M66 351.31 V363.69" stroke="#50c8d8" stroke-width="1" fill="none"/>
<rect x="76.5" y="343" width="12" height="11.31" fill="#4169f0" rx="2"/>
<rect x="76.5" y="360.69" width="12" height="11.31" fill="#4169f0" rx="2"/>
<path d="M75 349.22 V365.78 M90 349.22 V365.78" stroke="#5c9cf0" stroke-width="1" fill="none"/>
<path d="M77 351.31 V363.69 M88 351.31 V363.69" stroke="#50c8d8" stroke-width="1" fill="none"/>
<path d="M82.5 332 L82.5 343" fill="none" stroke="#4a58d4" stroke-width="4" stroke-linecap="butt" stroke-linejoin="miter"/>
<rect x="80.5" y="329.7" width="4" height="4" fill="#d8283c"/>
<rect x="81.5" y="330.7" width="2" height="2" fill="#ffb0a0"/>
<path d="M60.8 372 L60.8 382.7" fill="none" stroke="#4a58d4" stroke-width="4" stroke-linecap="butt" stroke-linejoin="miter"/>
<rect x="58.8" y="380.7" width="4" height="4" fill="#d8283c"/>
<rect x="59.8" y="381.7" width="2" height="2" fill="#ffb0a0"/>
<path d="M82.5 372 L82.5 382" fill="none" stroke="#4a58d4" stroke-width="4" stroke-linecap="butt" stroke-linejoin="miter"/>
<rect x="80.5" y="380" width="4" height="4" fill="#d8283c"/>
<rect x="81.5" y="381" width="2" height="2" fill="#ffb0a0"/>
<rect x="34" y="429.5" width="23" height="5" fill="#4a58d4"/>
<rect x="28.5" y="427.7" width="12" height="11.74" fill="#4169f0" rx="2"/>
<rect x="28.5" y="446.06" width="12" height="11.74" fill="#4169f0" rx="2"/>
<path d="M27 434.16 V451.34 M42 434.16 V451.34" stroke="#5c9cf0" stroke-width="1" fill="none"/>
<path d="M29 436.44 V449.06 M40 436.44 V449.06" stroke="#50c8d8" stroke-width="1" fill="none"/>
<rect x="51.3" y="427.7" width="12" height="11.74" fill="#4169f0" rx="2"/>
<rect x="51.3" y="446.06" width="12" height="11.74" fill="#4169f0" rx="2"/>
<path d="M49.8 434.16 V451.34 M64.8 434.16 V451.34" stroke="#5c9cf0" stroke-width="1" fill="none"/>
<path d="M51.8 436.44 V449.06 M62.8 436.44 V449.06" stroke="#50c8d8" stroke-width="1" fill="none"/>
<path d="M57.3 415 L57.3 428" fill="none" stroke="#4a58d4" stroke-width="4" stroke-linecap="butt" stroke-linejoin="miter"/>
<rect x="55.3" y="412.8" width="4" height="4" fill="#d8283c"/>
<rect x="56.3" y="413.8" width="2" height="2" fill="#ffb0a0"/>
<path d="M34.7 457 L34.7 468.7" fill="none" stroke="#4a58d4" stroke-width="4" stroke-linecap="butt" stroke-linejoin="miter"/>
<rect x="32.7" y="466.7" width="4" height="4" fill="#d8283c"/>
<rect x="33.7" y="467.7" width="2" height="2" fill="#ffb0a0"/>
<path d="M57.3 457 L57.3 468.7" fill="none" stroke="#4a58d4" stroke-width="4" stroke-linecap="butt" stroke-linejoin="miter"/>
<rect x="55.3" y="466.7" width="4" height="4" fill="#d8283c"/>
<rect x="56.3" y="467.7" width="2" height="2" fill="#ffb0a0"/>
<rect x="2.6" y="460.7" width="12" height="11.15" fill="#4169f0" rx="2"/>
<rect x="2.6" y="478.15" width="12" height="11.15" fill="#4169f0" rx="2"/>
<path d="M1.1 466.83 V483.17 M16.1 466.83 V483.17" stroke="#5c9cf0" stroke-width="1" fill="none"/>
<path d="M3.1 468.85 V481.15 M14.1 468.85 V481.15" stroke="#50c8d8" stroke-width="1" fill="none"/>
<path d="M9 489 L9 499.3" fill="none" stroke="#4a58d4" stroke-width="4" stroke-linecap="butt" stroke-linejoin="miter"/>
<rect x="7" y="497.3" width="4" height="4" fill="#d8283c"/>
<rect x="8" y="498.3" width="2" height="2" fill="#ffb0a0"/>
<path d="M0 448 L6 455 L16 460" fill="none" stroke="#4a58d4" stroke-width="1.5" stroke-linecap="butt" stroke-linejoin="miter"/>
<path d="M16 459 L22 465 L22 503.5" fill="none" stroke="#4a58d4" stroke-width="1.5" stroke-linecap="butt" stroke-linejoin="miter"/>
<path d="M22 503.5 L14 511.5 L0 511.5" fill="none" stroke="#6cb84a" stroke-width="1.2" stroke-linecap="butt" stroke-linejoin="miter"/>
<rect x="20.5" y="501.6" width="4" height="4" fill="#d8283c"/>
<rect x="21.5" y="502.6" width="2" height="2" fill="#ffb0a0"/>
<rect x="354.5" y="130" width="36.25" height="13.5" fill="#4169f0"/>
<path d="M394.5 139 L399.5 144.5 L512 144.5 L517 139" fill="none" stroke="#4a58d4" stroke-width="5" stroke-linecap="butt" stroke-linejoin="miter"/>
<path d="M422 139 L445.75 161 L445.75 356 L510.75 422.25 L545.75 422.25" fill="none" stroke="#c4c4c4" stroke-width="5" stroke-linecap="butt" stroke-linejoin="round"/>
<circle cx="445.75" cy="161" r="3" fill="#f4f4f4"/>
<circle cx="445.75" cy="356" r="3" fill="#f4f4f4"/>
<circle cx="510.75" cy="422.25" r="3" fill="#f4f4f4"/>
<circle cx="545.75" cy="422.25" r="2.5" fill="#f4f4f4"/>
<path d="M245 156.75 L498.25 156.75 L502 161 L502 168.5" fill="none" stroke="#4a58d4" stroke-width="2" stroke-linecap="butt" stroke-linejoin="miter"/>
<rect x="297" y="152.2" width="11" height="11.7" fill="#4169f0" rx="2"/>
<rect x="297" y="170.5" width="11" height="11.7" fill="#4169f0" rx="2"/>
<path d="M295.5 158.63 V175.76 M309.5 158.63 V175.76" stroke="#5c9cf0" stroke-width="1" fill="none"/>
<path d="M297.5 160.9 V173.5 M307.5 160.9 V173.5" stroke="#50c8d8" stroke-width="1" fill="none"/>
<rect x="316.75" y="152.2" width="12.5" height="11.7" fill="#4169f0" rx="2"/>
<rect x="316.75" y="170.5" width="12.5" height="11.7" fill="#4169f0" rx="2"/>
<path d="M315.25 158.63 V175.76 M330.75 158.63 V175.76" stroke="#5c9cf0" stroke-width="1" fill="none"/>
<path d="M317.25 160.9 V173.5 M328.75 160.9 V173.5" stroke="#50c8d8" stroke-width="1" fill="none"/>
<path d="M302.8 182 L302.8 193.5" fill="none" stroke="#4a58d4" stroke-width="5" stroke-linecap="butt" stroke-linejoin="miter"/>
<rect x="301" y="191.4" width="4" height="4" fill="#d8283c"/>
<rect x="302" y="192.4" width="2" height="2" fill="#ffb0a0"/>
<path d="M323.5 182 L323.5 193.5" fill="none" stroke="#4a58d4" stroke-width="5" stroke-linecap="butt" stroke-linejoin="miter"/>
<rect x="321.5" y="191.4" width="4" height="4" fill="#d8283c"/>
<rect x="322.5" y="192.4" width="2" height="2" fill="#ffb0a0"/>
<rect x="354" y="176" width="37" height="36" fill="#4169f0"/>
<rect x="354" y="245" width="37" height="36" fill="#4169f0"/>
<text x="372.5" y="194" font-family='"Liberation Sans", sans-serif' font-size="11" fill="#ffffff" text-anchor="middle" dominant-baseline="central" transform="rotate(-90 372.5 194)">21</text>
<text x="372.5" y="263" font-family='"Liberation Sans", sans-serif' font-size="11" fill="#ffffff" text-anchor="middle" dominant-baseline="central" transform="rotate(-90 372.5 263)">1L</text>
<path d="M351.25 194 L351.25 296" fill="none" stroke="#5c9cf0" stroke-width="1.5" stroke-linecap="butt" stroke-linejoin="miter"/>
<path d="M394.5 194 L394.5 296" fill="none" stroke="#5c9cf0" stroke-width="1.5" stroke-linecap="butt" stroke-linejoin="miter"/>
<path d="M340.75 194 L354 194" fill="none" stroke="#4a58d4" stroke-width="5" stroke-linecap="butt" stroke-linejoin="miter"/>
<rect x="338.75" y="192" width="4" height="4" fill="#d8283c"/>
<rect x="339.75" y="193" width="2" height="2" fill="#ffb0a0"/>
<path d="M332 263 L354 263" fill="none" stroke="#4a58d4" stroke-width="5" stroke-linecap="butt" stroke-linejoin="miter"/>
<rect x="330" y="261" width="4" height="4" fill="#d8283c"/>
<rect x="331" y="262" width="2" height="2" fill="#ffb0a0"/>
<path d="M391 194 L399.5 194 L409.5 182.25 L416 182.25" fill="none" stroke="#4a58d4" stroke-width="5" stroke-linecap="butt" stroke-linejoin="miter"/>
<rect x="410" y="171" width="12" height="11.7" fill="#4169f0" rx="2"/>
<rect x="410" y="189.3" width="12" height="11.7" fill="#4169f0" rx="2"/>
<path d="M408.5 177.44 V194.56 M423.5 177.44 V194.56" stroke="#5c9cf0" stroke-width="1" fill="none"/>
<path d="M410.5 179.7 V192.3 M421.5 179.7 V192.3" stroke="#50c8d8" stroke-width="1" fill="none"/>
<rect x="433.5" y="171" width="12" height="11.7" fill="#4169f0" rx="2"/>
<rect x="433.5" y="189.3" width="12" height="11.7" fill="#4169f0" rx="2"/>
<path d="M432 177.44 V194.56 M447 177.44 V194.56" stroke="#5c9cf0" stroke-width="1" fill="none"/>
<path d="M434 179.7 V192.3 M445 179.7 V192.3" stroke="#50c8d8" stroke-width="1" fill="none"/>
<rect x="457" y="171" width="12" height="11.7" fill="#4169f0" rx="2"/>
<rect x="457" y="189.3" width="12" height="11.7" fill="#4169f0" rx="2"/>
<path d="M455.5 177.44 V194.56 M470.5 177.44 V194.56" stroke="#5c9cf0" stroke-width="1" fill="none"/>
<path d="M457.5 179.7 V192.3 M468.5 179.7 V192.3" stroke="#50c8d8" stroke-width="1" fill="none"/>
<path d="M422 192 L434 192" fill="none" stroke="#4a58d4" stroke-width="1.5" stroke-linecap="butt" stroke-linejoin="miter"/>
<path d="M469 175 L484.5 175 L492 182 L492 190" fill="none" stroke="#4a58d4" stroke-width="1.5" stroke-linecap="butt" stroke-linejoin="miter"/>
<path d="M463 201 L463 210" fill="none" stroke="#4a58d4" stroke-width="4" stroke-linecap="butt" stroke-linejoin="miter"/>
<rect x="461" y="208" width="4" height="4" fill="#d8283c"/>
<rect x="462" y="209" width="2" height="2" fill="#ffb0a0"/>
<rect x="489.5" y="168.5" width="24.5" height="33" fill="none" stroke="#50c8d8" stroke-width="1"/>
<rect x="489.5" y="170" width="5" height="8" fill="#4169f0"/>
<rect x="499.5" y="170" width="5" height="8" fill="#4169f0"/>
<rect x="508.25" y="170" width="5" height="8" fill="#4169f0"/>
<rect x="489.5" y="195" width="5" height="7" fill="#4169f0"/>
<rect x="508.5" y="195" width="5" height="7" fill="#4169f0"/>
<path d="M489 183.5 L516 183.5" fill="none" stroke="#5c9cf0" stroke-width="2" stroke-linecap="butt" stroke-linejoin="miter"/>
<rect x="482.5" y="169.75" width="4" height="4" fill="#d8283c"/>
<rect x="483.5" y="170.75" width="2" height="2" fill="#ffb0a0"/>
<rect x="508.75" y="155.25" width="4" height="4" fill="#d8283c"/>
<rect x="509.75" y="156.25" width="2" height="2" fill="#ffb0a0"/>
<path d="M510.75 157 L510.75 170" fill="none" stroke="#4a58d4" stroke-width="3" stroke-linecap="butt" stroke-linejoin="miter"/>
<path d="M511 199 L531 199" fill="none" stroke="#4a58d4" stroke-width="3" stroke-linecap="butt" stroke-linejoin="miter"/>
<rect x="527" y="172.25" width="12.5" height="11.21" fill="#4169f0" rx="2"/>
<rect x="527" y="189.79" width="12.5" height="11.21" fill="#4169f0" rx="2"/>
<path d="M525.5 178.42 V194.83 M541 178.42 V194.83" stroke="#5c9cf0" stroke-width="1" fill="none"/>
<path d="M527.5 180.46 V192.79 M539 180.46 V192.79" stroke="#50c8d8" stroke-width="1" fill="none"/>
<path d="M534 159 L534 172" fill="none" stroke="#4a58d4" stroke-width="4" stroke-linecap="butt" stroke-linejoin="miter"/>
<rect x="532" y="157" width="4" height="4" fill="#d8283c"/>
<rect x="533" y="158" width="2" height="2" fill="#ffb0a0"/>
<path d="M555.75 139 L555.75 221 L535.75 241 L517 241" fill="none" stroke="#4a58d4" stroke-width="5" stroke-linecap="butt" stroke-linejoin="round"/>
<rect x="553.75" y="219" width="4" height="4" fill="#d8283c"/>
<rect x="554.75" y="220" width="2" height="2" fill="#ffb0a0"/>
<path d="M558 221 L575 221" fill="none" stroke="#c4c4c4" stroke-width="4" stroke-linecap="butt" stroke-linejoin="miter"/>
<rect x="489.5" y="237.25" width="37" height="44.25" fill="none" stroke="#50c8d8" stroke-width="1"/>
<rect x="504" y="237" width="12.25" height="12" fill="#4169f0"/>
<rect x="489.5" y="269.75" width="12" height="11.75" fill="#4169f0"/>
<rect x="514.5" y="269.75" width="12" height="11.75" fill="#4169f0"/>
<path d="M482 251.5 L489.5 258 L482 264.75 Z" fill="none" stroke="#5c9cf0" stroke-width="1.5"/>
<path d="M482 258 L534.5 258" fill="none" stroke="#5c9cf0" stroke-width="2" stroke-linecap="butt" stroke-linejoin="miter"/>
<path d="M439.5 196 L439.5 229.75 L488.25 276" fill="none" stroke="#4a58d4" stroke-width="1.5" stroke-linecap="butt" stroke-linejoin="miter"/>
<path d="M372.5 281 L372.5 291 L384.5 302.25 L505.75 302.25 L520.75 288.5 L520.75 281" fill="none" stroke="#4a58d4" stroke-width="5" stroke-linecap="butt" stroke-linejoin="round"/>
<path d="M570.75 223.5 L570.75 292.25" fill="none" stroke="#5c9cf0" stroke-width="1.5" stroke-linecap="butt" stroke-linejoin="miter"/>
<path d="M591 139 L591 340" fill="none" stroke="#9a0a3c" stroke-width="2.5" stroke-linecap="butt" stroke-linejoin="miter"/>
<path d="M625.4 139 L660.7 176 L660.7 340" fill="none" stroke="#9a0a3c" stroke-width="2.5" stroke-linecap="butt" stroke-linejoin="miter"/>
<rect x="611" y="203.8" width="22" height="36.2" fill="#ffffff"/>
<rect x="611" y="272.5" width="22" height="36.3" fill="#ffffff"/>
<path d="M611 223.8 L633 223.8" fill="none" stroke="#8a9ab0" stroke-width="1" stroke-linecap="butt" stroke-linejoin="miter"/>
<rect x="611" y="290.6" width="22" height="5.4" fill="#6f8ff0"/>
<path d="M593.9 243 L593.9 275" fill="none" stroke="#f0a0d0" stroke-width="1.2" stroke-linecap="butt" stroke-linejoin="miter"/>
<path d="M598 243 L598 275" fill="none" stroke="#50c8d8" stroke-width="1.2" stroke-linecap="butt" stroke-linejoin="miter"/>
<path d="M611 243 L611 275" fill="none" stroke="#50c8d8" stroke-width="1.2" stroke-linecap="butt" stroke-linejoin="miter"/>
<path d="M615.8 243 L615.8 275" fill="none" stroke="#5c9cf0" stroke-width="1.2" stroke-linecap="butt" stroke-linejoin="miter"/>
<path d="M629 243 L629 275" fill="none" stroke="#5c9cf0" stroke-width="1.2" stroke-linecap="butt" stroke-linejoin="miter"/>
<path d="M633 243 L633 275" fill="none" stroke="#50c8d8" stroke-width="1.2" stroke-linecap="butt" stroke-linejoin="miter"/>
<path d="M637.8 243 L637.8 275" fill="none" stroke="#f0a0d0" stroke-width="1.2" stroke-linecap="butt" stroke-linejoin="miter"/>
<rect x="576.1" y="205.7" width="34.9" height="37.2" fill="#4169f0"/>
<rect x="576.1" y="275" width="34.9" height="36.6" fill="#4169f0"/>
<rect x="634" y="205.7" width="35.7" height="37.2" fill="#4169f0"/>
<rect x="634" y="275" width="35.7" height="36.6" fill="#4169f0"/>
<path d="M591 205 L591 312" fill="none" stroke="#9a0a3c" stroke-width="2.5" stroke-linecap="butt" stroke-linejoin="miter"/>
<path d="M660.7 205 L660.7 312" fill="none" stroke="#9a0a3c" stroke-width="2.5" stroke-linecap="butt" stroke-linejoin="miter"/>
<path d="M576.5 205 L576.5 312" fill="none" stroke="#50c8d8" stroke-width="1" stroke-linecap="butt" stroke-linejoin="miter"/>
<path d="M669.5 205 L669.5 312" fill="none" stroke="#50c8d8" stroke-width="1" stroke-linecap="butt" stroke-linejoin="miter"/>
<text x="593.5" y="224" font-family='"Liberation Sans", sans-serif' font-size="10" fill="#ffffff" text-anchor="middle" dominant-baseline="central" transform="rotate(-90 593.5 224)">21</text>
<text x="593.5" y="293" font-family='"Liberation Sans", sans-serif' font-size="10" fill="#ffffff" text-anchor="middle" dominant-baseline="central" transform="rotate(-90 593.5 293)">1L</text>
<text x="652" y="224" font-family='"Liberation Sans", sans-serif' font-size="10" fill="#ffffff" text-anchor="middle" dominant-baseline="central" transform="rotate(-90 652 224)">21</text>
<text x="652" y="293" font-family='"Liberation Sans", sans-serif' font-size="10" fill="#ffffff" text-anchor="middle" dominant-baseline="central" transform="rotate(-90 652 293)">1L</text>
<path d="M572 221 L572 292" fill="none" stroke="#50c8d8" stroke-width="1.2" stroke-linecap="butt" stroke-linejoin="miter"/>
<path d="M615.8 311 L615.8 319.2" fill="none" stroke="#c4c4c4" stroke-width="4" stroke-linecap="butt" stroke-linejoin="miter"/>
<rect x="613.8" y="317.2" width="4" height="4" fill="#d8283c"/>
<rect x="614.8" y="318.2" width="2" height="2" fill="#ffb0a0"/>
<path d="M651.7 311 L651.7 320.2" fill="none" stroke="#4a58d4" stroke-width="4" stroke-linecap="butt" stroke-linejoin="miter"/>
<rect x="649.7" y="318.2" width="4" height="4" fill="#d8283c"/>
<rect x="650.7" y="319.2" width="2" height="2" fill="#ffb0a0"/>
<path d="M631 205.7 L635.9 199 L697.5 199 L697.5 229.5 L705 239" fill="none" stroke="#c4c4c4" stroke-width="5" stroke-linecap="butt" stroke-linejoin="round"/>
<circle cx="635.9" cy="199" r="2.5" fill="#f4f4f4"/>
<rect x="695.5" y="198" width="4" height="4" fill="#d8283c"/>
<rect x="696.5" y="199" width="2" height="2" fill="#ffb0a0"/>
<path d="M670.2 222.9 L675 225 L675 292.5" fill="none" stroke="#4a58d4" stroke-width="1.5" stroke-linecap="butt" stroke-linejoin="miter"/>
<path d="M679.8 229.5 L679.8 294.5 L689.3 304 L744 304 L749 296" fill="none" stroke="#4a58d4" stroke-width="1.5" stroke-linecap="butt" stroke-linejoin="miter"/>
<path d="M675 164.6 L675 150.3 L685.5 142.7 L754.4 142.7 L763 151.3 L763 162" fill="none" stroke="#4a58d4" stroke-width="2" stroke-linecap="butt" stroke-linejoin="miter"/>
<rect x="669.5" y="162.7" width="13" height="11.78" fill="#4169f0" rx="2"/>
<rect x="669.5" y="181.12" width="13" height="11.78" fill="#4169f0" rx="2"/>
<path d="M668 169.18 V186.42 M684 169.18 V186.42" stroke="#5c9cf0" stroke-width="1" fill="none"/>
<path d="M670 171.48 V184.12 M682 171.48 V184.12" stroke="#50c8d8" stroke-width="1" fill="none"/>
<rect x="690.5" y="162.7" width="13" height="11.78" fill="#4169f0" rx="2"/>
<rect x="690.5" y="181.12" width="13" height="11.78" fill="#4169f0" rx="2"/>
<path d="M689 169.18 V186.42 M705 169.18 V186.42" stroke="#5c9cf0" stroke-width="1" fill="none"/>
<path d="M691 171.48 V184.12 M703 171.48 V184.12" stroke="#50c8d8" stroke-width="1" fill="none"/>
<rect x="711.6" y="162.7" width="13" height="11.78" fill="#4169f0" rx="2"/>
<rect x="711.6" y="181.12" width="13" height="11.78" fill="#4169f0" rx="2"/>
<path d="M710.1 169.18 V186.42 M726.1 169.18 V186.42" stroke="#5c9cf0" stroke-width="1" fill="none"/>
<path d="M712.1 171.48 V184.12 M724.1 171.48 V184.12" stroke="#50c8d8" stroke-width="1" fill="none"/>
<rect x="734.5" y="162.7" width="13" height="11.78" fill="#4169f0" rx="2"/>
<rect x="734.5" y="181.12" width="13" height="11.78" fill="#4169f0" rx="2"/>
<path d="M733 169.18 V186.42 M749 169.18 V186.42" stroke="#5c9cf0" stroke-width="1" fill="none"/>
<path d="M735 171.48 V184.12 M747 171.48 V184.12" stroke="#50c8d8" stroke-width="1" fill="none"/>
<rect x="756.5" y="162.7" width="13" height="11.78" fill="#4169f0" rx="2"/>
<rect x="756.5" y="181.12" width="13" height="11.78" fill="#4169f0" rx="2"/>
<path d="M755 169.18 V186.42 M771 169.18 V186.42" stroke="#5c9cf0" stroke-width="1" fill="none"/>
<path d="M757 171.48 V184.12 M769 171.48 V184.12" stroke="#50c8d8" stroke-width="1" fill="none"/>
<path d="M723 186.6 L779 186.6" fill="none" stroke="#4a58d4" stroke-width="1.5" stroke-linecap="butt" stroke-linejoin="miter"/>
<path d="M702 161.8 L709.5 154.7 L741 154.7" fill="none" stroke="#c4c4c4" stroke-width="5" stroke-linecap="butt" stroke-linejoin="round"/>
<circle cx="709.5" cy="154.7" r="2.8" fill="#f4f4f4"/>
<rect x="739" y="152.7" width="4" height="4" fill="#d8283c"/>
<rect x="740" y="153.7" width="2" height="2" fill="#ffb0a0"/>
<path d="M741 155 L741 163" fill="none" stroke="#4a58d4" stroke-width="4" stroke-linecap="butt" stroke-linejoin="miter"/>
<rect x="708.6" y="216" width="13.4" height="30.7" fill="#ffffff"/>
<rect x="685.7" y="216" width="13" height="11.62" fill="#4169f0" rx="2"/>
<rect x="685.7" y="234.18" width="13" height="11.62" fill="#4169f0" rx="2"/>
<path d="M684.2 222.39 V239.41 M700.2 222.39 V239.41" stroke="#5c9cf0" stroke-width="1" fill="none"/>
<path d="M686.2 224.62 V237.18 M698.2 224.62 V237.18" stroke="#50c8d8" stroke-width="1" fill="none"/>
<rect x="709.3" y="216" width="12" height="11.97" fill="#4169f0" rx="2"/>
<rect x="709.3" y="234.73" width="12" height="11.97" fill="#4169f0" rx="2"/>
<path d="M707.8 222.59 V240.11 M722.8 222.59 V240.11" stroke="#5c9cf0" stroke-width="1" fill="none"/>
<path d="M709.8 224.97 V237.73 M720.8 224.97 V237.73" stroke="#50c8d8" stroke-width="1" fill="none"/>
<rect x="729.8" y="216" width="13" height="11.97" fill="#4169f0" rx="2"/>
<rect x="729.8" y="234.73" width="13" height="11.97" fill="#4169f0" rx="2"/>
<path d="M728.3 222.59 V240.11 M744.3 222.59 V240.11" stroke="#5c9cf0" stroke-width="1" fill="none"/>
<path d="M730.3 224.97 V237.73 M742.3 224.97 V237.73" stroke="#50c8d8" stroke-width="1" fill="none"/>
<rect x="751.3" y="216" width="12" height="11.97" fill="#4169f0" rx="2"/>
<rect x="751.3" y="234.73" width="12" height="11.97" fill="#4169f0" rx="2"/>
<path d="M749.8 222.59 V240.11 M764.8 222.59 V240.11" stroke="#5c9cf0" stroke-width="1" fill="none"/>
<path d="M751.8 224.97 V237.73 M762.8 224.97 V237.73" stroke="#50c8d8" stroke-width="1" fill="none"/>
<path d="M726.3 205.7 L716.2 214.2" fill="none" stroke="#c4c4c4" stroke-width="5" stroke-linecap="butt" stroke-linejoin="miter"/>
<circle cx="716.2" cy="214.2" r="2.5" fill="#f4f4f4"/>
<path d="M704.8 240 L724.8 240 L729.6 245.7 L729.6 268.6" fill="none" stroke="#c4c4c4" stroke-width="5" stroke-linecap="butt" stroke-linejoin="round"/>
<circle cx="704.8" cy="240" r="3" fill="#f4f4f4"/>
<circle cx="725.8" cy="240" r="3" fill="#f4f4f4"/>
<rect x="724.2" y="203.7" width="4" height="4" fill="#d8283c"/>
<rect x="725.2" y="204.7" width="2" height="2" fill="#ffb0a0"/>
<rect x="712.9" y="250.8" width="4" height="4" fill="#d8283c"/>
<rect x="713.9" y="251.8" width="2" height="2" fill="#ffb0a0"/>
<rect x="742.8" y="249.5" width="4" height="4" fill="#d8283c"/>
<rect x="743.8" y="250.5" width="2" height="2" fill="#ffb0a0"/>
<rect x="705.6" y="267.6" width="4" height="4" fill="#d8283c"/>
<rect x="706.6" y="268.6" width="2" height="2" fill="#ffb0a0"/>
<rect x="727.6" y="266.6" width="4" height="4" fill="#d8283c"/>
<rect x="728.6" y="267.6" width="2" height="2" fill="#ffb0a0"/>
<path d="M736.3 216 L736.3 209.5 L743 203.7 L779.8 204.7" fill="none" stroke="#4a58d4" stroke-width="1.5" stroke-linecap="butt" stroke-linejoin="miter"/>
<path d="M763 214.2 L779.8 213.3" fill="none" stroke="#4a58d4" stroke-width="1.5" stroke-linecap="butt" stroke-linejoin="miter"/>
<path d="M761 246.7 L765.8 248.6 L779.8 249" fill="none" stroke="#4a58d4" stroke-width="1.5" stroke-linecap="butt" stroke-linejoin="miter"/>
<path d="M757.3 246 L744.8 251.5" fill="none" stroke="#4a58d4" stroke-width="4" stroke-linecap="butt" stroke-linejoin="miter"/>
<rect x="702.1" y="278.2" width="11" height="11.89" fill="#4169f0" rx="2"/>
<rect x="702.1" y="296.81" width="11" height="11.89" fill="#4169f0" rx="2"/>
<path d="M700.6 284.74 V302.16 M714.6 284.74 V302.16" stroke="#5c9cf0" stroke-width="1" fill="none"/>
<path d="M702.6 287.09 V299.81 M712.6 287.09 V299.81" stroke="#50c8d8" stroke-width="1" fill="none"/>
<rect x="724.1" y="278.2" width="11" height="11.89" fill="#4169f0" rx="2"/>
<rect x="724.1" y="296.81" width="11" height="11.89" fill="#4169f0" rx="2"/>
<path d="M722.6 284.74 V302.16 M736.6 284.74 V302.16" stroke="#5c9cf0" stroke-width="1" fill="none"/>
<path d="M724.6 287.09 V299.81 M734.6 287.09 V299.81" stroke="#50c8d8" stroke-width="1" fill="none"/>
<path d="M707.6 270 L707.6 278" fill="none" stroke="#4a58d4" stroke-width="4" stroke-linecap="butt" stroke-linejoin="miter"/>
<path d="M760 276.3 L747.3 276.3 L747.3 309.7 L770 309.7" fill="none" stroke="#5c9cf0" stroke-width="2" stroke-linecap="butt" stroke-linejoin="miter"/>
<path d="M785 276.3 L803 276.3 L803 309.7 L785 309.7" fill="none" stroke="#5c9cf0" stroke-width="2" stroke-linecap="butt" stroke-linejoin="miter"/>
<rect x="751.5" y="283" width="19.5" height="20.6" fill="#4169f0"/>
<rect x="778.2" y="283" width="20.1" height="20.6" fill="#4169f0"/>
<path d="M771 283.5 L778 283.5" fill="none" stroke="#50c8d8" stroke-width="1" stroke-linecap="butt" stroke-linejoin="miter"/>
<path d="M771 303 L778 303" fill="none" stroke="#50c8d8" stroke-width="1" stroke-linecap="butt" stroke-linejoin="miter"/>
<text x="761" y="293" font-family='"Liberation Sans", sans-serif' font-size="9" fill="#ffffff" text-anchor="middle" dominant-baseline="central" transform="rotate(-60 761 293)">2L</text>
<text x="788" y="293" font-family='"Liberation Sans", sans-serif' font-size="9" fill="#ffffff" text-anchor="middle" dominant-baseline="central" transform="rotate(-90 788 293)">1L</text>
<path d="M787.8 263 L787.8 283" fill="none" stroke="#4a58d4" stroke-width="2" stroke-linecap="butt" stroke-linejoin="miter"/>
<rect x="779.2" y="171.3" width="90.3" height="94.5" fill="none" stroke="#50c8d8" stroke-width="1"/>
<rect x="779.8" y="175.6" width="15.2" height="4.8" fill="#4169f0"/>
<rect x="855.5" y="175.6" width="14" height="4.8" fill="#4169f0"/>
<rect x="779.8" y="184.7" width="15.2" height="4.8" fill="#4169f0"/>
<rect x="855.5" y="184.7" width="14" height="4.8" fill="#4169f0"/>
<rect x="779.8" y="193.7" width="15.2" height="4.8" fill="#4169f0"/>
<rect x="855.5" y="193.7" width="14" height="4.8" fill="#4169f0"/>
<rect x="779.8" y="202.3" width="15.2" height="4.8" fill="#4169f0"/>
<rect x="855.5" y="202.3" width="14" height="4.8" fill="#4169f0"/>
<rect x="779.8" y="210.9" width="15.2" height="4.8" fill="#4169f0"/>
<rect x="855.5" y="210.9" width="14" height="4.8" fill="#4169f0"/>
<rect x="779.8" y="219.9" width="15.2" height="4.8" fill="#4169f0"/>
<rect x="855.5" y="219.9" width="14" height="4.8" fill="#4169f0"/>
<rect x="779.8" y="228.4" width="15.2" height="4.8" fill="#4169f0"/>
<rect x="855.5" y="228.4" width="14" height="4.8" fill="#4169f0"/>
<rect x="779.8" y="237.6" width="15.2" height="4.8" fill="#4169f0"/>
<rect x="855.5" y="237.6" width="14" height="4.8" fill="#4169f0"/>
<rect x="779.8" y="246.6" width="15.2" height="4.8" fill="#4169f0"/>
<rect x="855.5" y="246.6" width="14" height="4.8" fill="#4169f0"/>
<rect x="779.8" y="255.2" width="15.2" height="4.8" fill="#4169f0"/>
<rect x="855.5" y="255.2" width="14" height="4.8" fill="#4169f0"/>
<path d="M786.8 172 L869.5 172" fill="none" stroke="#5c9cf0" stroke-width="2.5" stroke-linecap="butt" stroke-linejoin="miter"/>
<path d="M819 172 Q825 180 831 172" fill="none" stroke="#5c9cf0" stroke-width="2"/>
<path d="M787.8 263 L860.3 263" fill="none" stroke="#5c9cf0" stroke-width="2.5" stroke-linecap="butt" stroke-linejoin="miter"/>
<rect x="774" y="175.6" width="4" height="4" fill="#d8283c"/>
<rect x="775" y="176.6" width="2" height="2" fill="#ffb0a0"/>
<path d="M795 178 L804 173.2 L804 191.3 L795 196" fill="none" stroke="#4a58d4" stroke-width="1.5" stroke-linecap="butt" stroke-linejoin="miter"/>
<rect x="810.7" y="222.8" width="11.8" height="12.4" fill="#ffffff"/>
<rect x="810.7" y="241" width="11.8" height="11.4" fill="#ffffff"/>
<rect x="830.7" y="222.8" width="12.4" height="12.4" fill="#ffffff"/>
<rect x="830.7" y="241" width="12.4" height="11.4" fill="#ffffff"/>
<path d="M808.7 226 L808.7 249" fill="none" stroke="#e070c0" stroke-width="1" stroke-linecap="butt" stroke-linejoin="miter"/>
<path d="M824.5 226 L824.5 249" fill="none" stroke="#e070c0" stroke-width="1" stroke-linecap="butt" stroke-linejoin="miter"/>
<path d="M828.7 226 L828.7 249" fill="none" stroke="#e070c0" stroke-width="1" stroke-linecap="butt" stroke-linejoin="miter"/>
<path d="M845.1 226 L845.1 249" fill="none" stroke="#e070c0" stroke-width="1" stroke-linecap="butt" stroke-linejoin="miter"/>
<path d="M816.4 222.8 L816.4 203.7 L825.6 196.1" fill="none" stroke="#c4c4c4" stroke-width="3" stroke-linecap="butt" stroke-linejoin="miter"/>
<path d="M837.4 222.8 L837.4 211.4 L844 204.7" fill="none" stroke="#c4c4c4" stroke-width="3" stroke-linecap="butt" stroke-linejoin="miter"/>
<path d="M822 246.3 L831 246.3" fill="none" stroke="#c4c4c4" stroke-width="4" stroke-linecap="butt" stroke-linejoin="miter"/>
<path d="M837.4 252 L837.4 271.9" fill="none" stroke="#c4c4c4" stroke-width="4" stroke-linecap="butt" stroke-linejoin="miter"/>
<rect x="823.6" y="194.1" width="4" height="4" fill="#d8283c"/>
<rect x="824.6" y="195.1" width="2" height="2" fill="#ffb0a0"/>
<rect x="842" y="202.7" width="4" height="4" fill="#d8283c"/>
<rect x="843" y="203.7" width="2" height="2" fill="#ffb0a0"/>
<path d="M825.6 196.1 L869 196.1" fill="none" stroke="#4a58d4" stroke-width="1.5" stroke-linecap="butt" stroke-linejoin="miter"/>
<path d="M844 204.7 L869 204.7" fill="none" stroke="#4a58d4" stroke-width="1.5" stroke-linecap="butt" stroke-linejoin="miter"/>
<path d="M837.4 272 L856.5 272 L861.3 261" fill="none" stroke="#4a58d4" stroke-width="6" stroke-linecap="butt" stroke-linejoin="round"/>
<rect x="835.4" y="269.9" width="4" height="4" fill="#d8283c"/>
<rect x="836.4" y="270.9" width="2" height="2" fill="#ffb0a0"/>
<path d="M869.5 177.2 L886 177.2" fill="none" stroke="#4a58d4" stroke-width="1.5" stroke-linecap="butt" stroke-linejoin="miter"/>
<path d="M869.5 186.7 L876.3 186.7 L880.6 192.7 L880.6 211.6 L892.6 225.3" fill="none" stroke="#4a58d4" stroke-width="1.5" stroke-linecap="butt" stroke-linejoin="miter"/>
<path d="M869.5 230.5 L876.3 234.8 L876.3 247.7 L883.2 252 L886 252" fill="none" stroke="#4a58d4" stroke-width="1.5" stroke-linecap="butt" stroke-linejoin="miter"/>
<path d="M898 252 L908.1 252 L911.5 233.9 L917.6 227" fill="none" stroke="#4a58d4" stroke-width="1.5" stroke-linecap="butt" stroke-linejoin="miter"/>
<path d="M919.3 195.3 L927.9 195.3 L936.5 206.4 L936.5 216.8" fill="none" stroke="#4a58d4" stroke-width="1.5" stroke-linecap="butt" stroke-linejoin="miter"/>
<path d="M936.5 206.4 L949.3 193.6 L949.3 188" fill="none" stroke="#4a58d4" stroke-width="1.5" stroke-linecap="butt" stroke-linejoin="miter"/>
<rect x="886.05" y="173" width="11.5" height="11.31" fill="#4169f0" rx="2"/>
<rect x="886.05" y="190.69" width="11.5" height="11.31" fill="#4169f0" rx="2"/>
<path d="M884.55 179.22 V195.78 M899.05 179.22 V195.78" stroke="#5c9cf0" stroke-width="1" fill="none"/>
<path d="M886.55 181.31 V193.69 M897.05 181.31 V193.69" stroke="#50c8d8" stroke-width="1" fill="none"/>
<path d="M891.8 202 L891.8 206" fill="none" stroke="#4a58d4" stroke-width="4" stroke-linecap="butt" stroke-linejoin="miter"/>
<rect x="889.8" y="204.4" width="4" height="4" fill="#d8283c"/>
<rect x="890.8" y="205.4" width="2" height="2" fill="#ffb0a0"/>
<rect x="907.3" y="172" width="13" height="11.7" fill="#4169f0" rx="2"/>
<rect x="907.3" y="190.3" width="13" height="11.7" fill="#4169f0" rx="2"/>
<path d="M905.8 178.44 V195.56 M921.8 178.44 V195.56" stroke="#5c9cf0" stroke-width="1" fill="none"/>
<path d="M907.8 180.7 V193.3 M919.8 180.7 V193.3" stroke="#50c8d8" stroke-width="1" fill="none"/>
<path d="M914.8 164 L914.8 172" fill="none" stroke="#4a58d4" stroke-width="4" stroke-linecap="butt" stroke-linejoin="miter"/>
<rect x="912.8" y="162.4" width="4" height="4" fill="#d8283c"/>
<rect x="913.8" y="163.4" width="2" height="2" fill="#ffb0a0"/>
<rect x="885.55" y="229.6" width="12.5" height="11.19" fill="#4169f0" rx="2"/>
<rect x="885.55" y="247.11" width="12.5" height="11.19" fill="#4169f0" rx="2"/>
<path d="M884.05 235.76 V252.14 M899.55 235.76 V252.14" stroke="#5c9cf0" stroke-width="1" fill="none"/>
<path d="M886.05 237.79 V250.11 M897.55 237.79 V250.11" stroke="#50c8d8" stroke-width="1" fill="none"/>
<path d="M955 161.8 L933.5 161.8 L933.5 193 L989.2 193 L989.2 161.8 L978 161.8" fill="none" stroke="#5c9cf0" stroke-width="2" stroke-linecap="butt" stroke-linejoin="miter"/>
<rect x="937" y="167" width="48" height="21.4" fill="none" stroke="#50c8d8" stroke-width="1"/>
<rect x="938.2" y="167" width="18" height="21" fill="#4169f0"/>
<rect x="965.2" y="167" width="18.5" height="21" fill="#4169f0"/>
<text x="947" y="178" font-family='"Liberation Sans", sans-serif' font-size="9" fill="#ffffff" text-anchor="middle" dominant-baseline="central" transform="rotate(-90 947 178)">2L</text>
<text x="974" y="178" font-family='"Liberation Sans", sans-serif' font-size="9" fill="#ffffff" text-anchor="middle" dominant-baseline="central" transform="rotate(-90 974 178)">1L</text>
<path d="M973.4 167 L973.4 146" fill="none" stroke="#4169f0" stroke-width="12" stroke-linecap="round" stroke-linejoin="miter"/>
<rect x="971.7" y="144" width="4" height="4" fill="#d8283c"/>
<rect x="972.7" y="145" width="2" height="2" fill="#ffb0a0"/>
<rect x="919.3" y="210.4" width="35.2" height="81.1" fill="none" stroke="#50c8d8" stroke-width="1"/>
<rect x="919.3" y="216.8" width="35.2" height="22.3" fill="#4169f0"/>
<rect x="919.3" y="264" width="35.2" height="21.5" fill="#4169f0"/>
<text x="937" y="228" font-family='"Liberation Sans", sans-serif' font-size="11" fill="#ffffff" text-anchor="middle" dominant-baseline="central">21</text>
<text x="937" y="275" font-family='"Liberation Sans", sans-serif' font-size="11" fill="#ffffff" text-anchor="middle" dominant-baseline="central">1L</text>
<path d="M915 226.2 L915 273.5" fill="none" stroke="#5c9cf0" stroke-width="2" stroke-linecap="butt" stroke-linejoin="miter"/>
<path d="M960 226.2 L960 273.5" fill="none" stroke="#5c9cf0" stroke-width="2" stroke-linecap="butt" stroke-linejoin="miter"/>
<path d="M925 285 L925 302" fill="none" stroke="#4a58d4" stroke-width="5" stroke-linecap="butt" stroke-linejoin="miter"/>
<rect x="923" y="300.3" width="4" height="4" fill="#d8283c"/>
<rect x="924" y="301.3" width="2" height="2" fill="#ffb0a0"/>
<path d="M937 285 L937 302" fill="none" stroke="#4a58d4" stroke-width="5" stroke-linecap="butt" stroke-linejoin="miter"/>
<rect x="935" y="300.3" width="4" height="4" fill="#d8283c"/>
<rect x="936" y="301.3" width="2" height="2" fill="#ffb0a0"/>
<path d="M949.7 285 L949.7 302" fill="none" stroke="#4a58d4" stroke-width="5" stroke-linecap="butt" stroke-linejoin="miter"/>
<rect x="947.7" y="300.3" width="4" height="4" fill="#d8283c"/>
<rect x="948.7" y="301.3" width="2" height="2" fill="#ffb0a0"/>
<rect x="1002.3" y="162.6" width="35.5" height="37.3" fill="#4169f0"/>
<rect x="1002.3" y="232.2" width="35.5" height="37" fill="#4169f0"/>
<rect x="1002.3" y="162.6" width="35.5" height="106.6" fill="none" stroke="#50c8d8" stroke-width="1"/>
<text x="1020" y="181" font-family='"Liberation Sans", sans-serif' font-size="11" fill="#ffffff" text-anchor="middle" dominant-baseline="central" transform="rotate(-90 1020 181)">21</text>
<text x="1020" y="251" font-family='"Liberation Sans", sans-serif' font-size="11" fill="#ffffff" text-anchor="middle" dominant-baseline="central" transform="rotate(-90 1020 251)">1L</text>
<path d="M997.5 179.8 L997.5 249.4" fill="none" stroke="#5c9cf0" stroke-width="2" stroke-linecap="butt" stroke-linejoin="miter"/>
<path d="M1043 179.8 L1043 249.4" fill="none" stroke="#5c9cf0" stroke-width="2" stroke-linecap="butt" stroke-linejoin="miter"/>
<path d="M1007.8 146 L1007.8 163" fill="none" stroke="#4a58d4" stroke-width="5.5" stroke-linecap="butt" stroke-linejoin="miter"/>
<rect x="1005.8" y="146.4" width="4" height="4" fill="#d8283c"/>
<rect x="1006.8" y="147.4" width="2" height="2" fill="#ffb0a0"/>
<path d="M1007.8 269 L1007.8 287" fill="none" stroke="#4a58d4" stroke-width="5.5" stroke-linecap="butt" stroke-linejoin="miter"/>
<rect x="1005.8" y="285.2" width="4" height="4" fill="#d8283c"/>
<rect x="1006.8" y="286.2" width="2" height="2" fill="#ffb0a0"/>
<path d="M1019.8 146 L1019.8 163" fill="none" stroke="#4a58d4" stroke-width="5.5" stroke-linecap="butt" stroke-linejoin="miter"/>
<rect x="1017.8" y="146.4" width="4" height="4" fill="#d8283c"/>
<rect x="1018.8" y="147.4" width="2" height="2" fill="#ffb0a0"/>
<path d="M1019.8 269 L1019.8 287" fill="none" stroke="#4a58d4" stroke-width="5.5" stroke-linecap="butt" stroke-linejoin="miter"/>
<rect x="1017.8" y="285.2" width="4" height="4" fill="#d8283c"/>
<rect x="1018.8" y="286.2" width="2" height="2" fill="#ffb0a0"/>
<path d="M1031 146 L1031 163" fill="none" stroke="#4a58d4" stroke-width="5.5" stroke-linecap="butt" stroke-linejoin="miter"/>
<rect x="1029" y="146.4" width="4" height="4" fill="#d8283c"/>
<rect x="1030" y="147.4" width="2" height="2" fill="#ffb0a0"/>
<path d="M1031 269 L1031 287" fill="none" stroke="#4a58d4" stroke-width="5.5" stroke-linecap="butt" stroke-linejoin="miter"/>
<rect x="1029" y="285.2" width="4" height="4" fill="#d8283c"/>
<rect x="1030" y="286.2" width="2" height="2" fill="#ffb0a0"/>
<path d="M982 236 L988 228.8 L1006 228.8 L1011.2 234" fill="none" stroke="#4169f0" stroke-width="10" stroke-linecap="butt" stroke-linejoin="round"/>
<rect x="976" y="228" width="12" height="11.7" fill="#4169f0" rx="2"/>
<rect x="976" y="246.3" width="12" height="11.7" fill="#4169f0" rx="2"/>
<path d="M974.5 234.44 V251.56 M989.5 234.44 V251.56" stroke="#5c9cf0" stroke-width="1" fill="none"/>
<path d="M976.5 236.7 V249.3 M987.5 236.7 V249.3" stroke="#50c8d8" stroke-width="1" fill="none"/>
<path d="M982 258 L982 273" fill="none" stroke="#4a58d4" stroke-width="12" stroke-linecap="round" stroke-linejoin="miter"/>
<circle cx="982" cy="273.1" r="3.5" fill="#d8283c"/>
<circle cx="982" cy="273.1" r="2" fill="#ff9c00"/>
<path d="M0 162 L584 515" fill="none" stroke="#e6e6e6" stroke-width="1" stroke-linecap="butt" stroke-linejoin="miter"/>
<path d="M0 149 L655 513" fill="none" stroke="#e6e6e6" stroke-width="1" stroke-linecap="butt" stroke-linejoin="miter"/>
<path d="M497 139 L723.4 540.4" fill="none" stroke="#e6e6e6" stroke-width="1" stroke-linecap="butt" stroke-linejoin="miter"/>
<path d="M245.2 139 L245.2 375.8 L0 621" fill="none" stroke="#c4c4c4" stroke-width="2" stroke-linecap="butt" stroke-linejoin="miter"/>
<path d="M257.6 139 L257.6 387.3 L124.3 519.1 L124.3 800.5 L108.75 816.75 L58.75 816.75" fill="none" stroke="#c4c4c4" stroke-width="2" stroke-linecap="butt" stroke-linejoin="miter"/>
<path d="M266.2 139 L266.2 398.8 L138.7 526.3 L138.7 621" fill="none" stroke="#c4c4c4" stroke-width="2" stroke-linecap="butt" stroke-linejoin="miter"/>
<path d="M275.6 139 L275.6 446 L156.7 564.4 L156.7 613" fill="none" stroke="#c4c4c4" stroke-width="2" stroke-linecap="butt" stroke-linejoin="miter"/>
<path d="M284.8 139 L284.8 506.2 L335.75 557 L544.6 557" fill="none" stroke="#c4c4c4" stroke-width="2" stroke-linecap="butt" stroke-linejoin="miter"/>
<rect x="56.75" y="814.75" width="4" height="4" fill="#d8283c"/>
<rect x="57.75" y="815.75" width="2" height="2" fill="#ffb0a0"/>
<rect x="194.5" y="469.8" width="144.2" height="140.4" fill="none" stroke="#50c8d8" stroke-width="1"/>
<rect x="226.9" y="470.4" width="81.4" height="138.1" fill="none" stroke="#5c9cf0" stroke-width="2.5"/>
<path d="M263 471 L267 475 L271 471" fill="none" stroke="#5c9cf0" stroke-width="1.5" stroke-linecap="butt" stroke-linejoin="miter"/>
<rect x="195.4" y="476.8" width="20" height="5.6" fill="#4169f0"/>
<text x="204" y="479.9" font-family='"Liberation Sans", sans-serif' font-size="7" fill="#ffffff" text-anchor="middle" dominant-baseline="central">1L</text>
<rect x="320.6" y="476.8" width="18.6" height="5.6" fill="#4169f0" rx="2.5"/>
<text x="330" y="479.9" font-family='"Liberation Sans", sans-serif' font-size="7" fill="#ffffff" text-anchor="middle" dominant-baseline="central">16L</text>
<rect x="195.4" y="494.2" width="20" height="5.6" fill="#4169f0" rx="2.5"/>
<text x="204" y="497.3" font-family='"Liberation Sans", sans-serif' font-size="7" fill="#ffffff" text-anchor="middle" dominant-baseline="central">2L</text>
<rect x="320.6" y="494.2" width="18.6" height="5.6" fill="#4169f0" rx="2.5"/>
<text x="330" y="497.3" font-family='"Liberation Sans", sans-serif' font-size="7" fill="#ffffff" text-anchor="middle" dominant-baseline="central">15L</text>
<rect x="195.4" y="511.4" width="20" height="5.6" fill="#4169f0" rx="2.5"/>
<text x="204" y="514.5" font-family='"Liberation Sans", sans-serif' font-size="7" fill="#ffffff" text-anchor="middle" dominant-baseline="central">3L</text>
<rect x="320.6" y="511.4" width="18.6" height="5.6" fill="#4169f0" rx="2.5"/>
<text x="330" y="514.5" font-family='"Liberation Sans", sans-serif' font-size="7" fill="#ffffff" text-anchor="middle" dominant-baseline="central">14L</text>
<rect x="195.4" y="528.6" width="20" height="5.6" fill="#4169f0" rx="2.5"/>
<text x="204" y="531.7" font-family='"Liberation Sans", sans-serif' font-size="7" fill="#ffffff" text-anchor="middle" dominant-baseline="central">4L</text>
<rect x="320.6" y="528.6" width="18.6" height="5.6" fill="#4169f0" rx="2.5"/>
<text x="330" y="531.7" font-family='"Liberation Sans", sans-serif' font-size="7" fill="#ffffff" text-anchor="middle" dominant-baseline="central">13L</text>
<rect x="195.4" y="545.8" width="20" height="5.6" fill="#4169f0" rx="2.5"/>
<text x="204" y="548.9" font-family='"Liberation Sans", sans-serif' font-size="7" fill="#ffffff" text-anchor="middle" dominant-baseline="central">5L</text>
<rect x="320.6" y="545.8" width="18.6" height="5.6" fill="#4169f0" rx="2.5"/>
<text x="330" y="548.9" font-family='"Liberation Sans", sans-serif' font-size="7" fill="#ffffff" text-anchor="middle" dominant-baseline="central">12L</text>
<rect x="195.4" y="563" width="20" height="5.6" fill="#4169f0" rx="2.5"/>
<text x="204" y="566.1" font-family='"Liberation Sans", sans-serif' font-size="7" fill="#ffffff" text-anchor="middle" dominant-baseline="central">6L</text>
<rect x="320.6" y="563" width="18.6" height="5.6" fill="#4169f0" rx="2.5"/>
<text x="330" y="566.1" font-family='"Liberation Sans", sans-serif' font-size="7" fill="#ffffff" text-anchor="middle" dominant-baseline="central">11L</text>
<rect x="195.4" y="580.2" width="20" height="5.6" fill="#4169f0" rx="2.5"/>
<text x="204" y="583.3" font-family='"Liberation Sans", sans-serif' font-size="7" fill="#ffffff" text-anchor="middle" dominant-baseline="central">7L</text>
<rect x="320.6" y="580.2" width="18.6" height="5.6" fill="#4169f0" rx="2.5"/>
<text x="330" y="583.3" font-family='"Liberation Sans", sans-serif' font-size="7" fill="#ffffff" text-anchor="middle" dominant-baseline="central">10L</text>
<rect x="195.4" y="597.4" width="20" height="5.6" fill="#4169f0" rx="2.5"/>
<text x="204" y="600.5" font-family='"Liberation Sans", sans-serif' font-size="7" fill="#ffffff" text-anchor="middle" dominant-baseline="central">8L</text>
<rect x="320.6" y="597.4" width="18.6" height="5.6" fill="#4169f0" rx="2.5"/>
<text x="330" y="600.5" font-family='"Liberation Sans", sans-serif' font-size="7" fill="#ffffff" text-anchor="middle" dominant-baseline="central">9L</text>
<path d="M188 497 L196 497" fill="none" stroke="#4a58d4" stroke-width="2" stroke-linecap="butt" stroke-linejoin="miter"/>
<rect x="186.25" y="495.25" width="3.5" height="3.5" fill="#d8283c"/>
<rect x="187" y="496" width="2" height="2" fill="#ffb0a0"/>
<path d="M188 514.2 L196 514.2" fill="none" stroke="#4a58d4" stroke-width="2" stroke-linecap="butt" stroke-linejoin="miter"/>
<rect x="186.25" y="512.45" width="3.5" height="3.5" fill="#d8283c"/>
<rect x="187" y="513.2" width="2" height="2" fill="#ffb0a0"/>
<path d="M188 600.2 L196 600.2" fill="none" stroke="#4a58d4" stroke-width="2" stroke-linecap="butt" stroke-linejoin="miter"/>
<rect x="186.25" y="598.45" width="3.5" height="3.5" fill="#d8283c"/>
<rect x="187" y="599.2" width="2" height="2" fill="#ffb0a0"/>
<path d="M157.3 237 L157.3 527.7 L178.8 547.8 L196 547.8" fill="none" stroke="#4a58d4" stroke-width="2" stroke-linecap="butt" stroke-linejoin="miter"/>
<path d="M350 453.8 L247.5 453.8 L240.4 463.2 L240.4 524.8 L228.9 532 L213 532" fill="none" stroke="#4a58d4" stroke-width="2" stroke-linecap="butt" stroke-linejoin="miter"/>
<path d="M214.6 479 L223.2 479 L230.3 488 L230.3 507.6 L223.2 513.4 L213 513.4" fill="none" stroke="#4a58d4" stroke-width="2" stroke-linecap="butt" stroke-linejoin="round"/>
<path d="M0 612.2 L247.5 612.2 L259 602.2 L259 513.4 L273.3 496.2 L320.6 496.2" fill="none" stroke="#4a58d4" stroke-width="2" stroke-linecap="butt" stroke-linejoin="miter"/>
<path d="M0 620.8 L251.8 620.8 L267.6 605 L267.6 527.7 L281.9 513.4 L320.6 513.4" fill="none" stroke="#4a58d4" stroke-width="2" stroke-linecap="butt" stroke-linejoin="miter"/>
<rect x="155.3" y="611.1" width="4" height="4" fill="#d8283c"/>
<rect x="156.3" y="612.1" width="2" height="2" fill="#ffb0a0"/>
<rect x="136.7" y="618.8" width="4" height="4" fill="#d8283c"/>
<rect x="137.7" y="619.8" width="2" height="2" fill="#ffb0a0"/>
<path d="M350 453.8 L434.4 453.8 L440.3 459.7 L440.3 482.3" fill="none" stroke="#4a58d4" stroke-width="2" stroke-linecap="butt" stroke-linejoin="miter"/>
<path d="M330 479 L349.7 479 L359.1 489.2 L359.1 526.6" fill="none" stroke="#4a58d4" stroke-width="5" stroke-linecap="butt" stroke-linejoin="miter"/>
<rect x="357.1" y="524.6" width="4" height="4" fill="#d8283c"/>
<rect x="358.1" y="525.6" width="2" height="2" fill="#ffb0a0"/>
<rect x="434" y="482.3" width="12.2" height="11" fill="#4169f0" rx="2"/>
<rect x="434" y="499.5" width="12.2" height="11" fill="#4169f0" rx="2"/>
<path d="M432.5 488.35 V504.45 M447.7 488.35 V504.45" stroke="#5c9cf0" stroke-width="1" fill="none"/>
<path d="M434.5 490.3 V502.5 M445.7 490.3 V502.5" stroke="#50c8d8" stroke-width="1" fill="none"/>
<path d="M421.6 485.3 L421.6 498 L430.4 505 L436 505" fill="none" stroke="#4a58d4" stroke-width="5" stroke-linecap="butt" stroke-linejoin="round"/>
<rect x="419.6" y="483.3" width="4" height="4" fill="#d8283c"/>
<rect x="420.6" y="484.3" width="2" height="2" fill="#ffb0a0"/>
<path d="M447.2 487.3 L454 493.2 L454 530.6 L444.2 542 L422.6 542" fill="none" stroke="#4a58d4" stroke-width="1.8" stroke-linecap="butt" stroke-linejoin="miter"/>
<rect x="460.4" y="482.3" width="10.4" height="11" fill="#4169f0" rx="2"/>
<rect x="460.4" y="499.5" width="10.4" height="11" fill="#4169f0" rx="2"/>
<path d="M458.9 488.35 V504.45 M472.3 488.35 V504.45" stroke="#5c9cf0" stroke-width="1" fill="none"/>
<path d="M460.9 490.3 V502.5 M470.3 490.3 V502.5" stroke="#50c8d8" stroke-width="1" fill="none"/>
<path d="M470 487 L487.1 487" fill="none" stroke="#4a58d4" stroke-width="5" stroke-linecap="butt" stroke-linejoin="miter"/>
<rect x="485.1" y="484.9" width="4" height="4" fill="#d8283c"/>
<rect x="486.1" y="485.9" width="2" height="2" fill="#ffb0a0"/>
<path d="M470.8 504.6 L496.4 504.6 L508.2 515.8 L508.2 591.6" fill="none" stroke="#4a58d4" stroke-width="1.8" stroke-linecap="butt" stroke-linejoin="miter"/>
<rect x="389.1" y="537.5" width="34.4" height="40.9" fill="none" stroke="#50c8d8" stroke-width="1"/>
<path d="M375.7 542 L419 542" fill="none" stroke="#4a58d4" stroke-width="5" stroke-linecap="butt" stroke-linejoin="miter"/>
<rect x="373.7" y="540" width="4" height="4" fill="#d8283c"/>
<rect x="374.7" y="541" width="2" height="2" fill="#ffb0a0"/>
<rect x="390.4" y="539" width="6" height="6.5" fill="#4169f0" rx="2"/>
<rect x="403.8" y="539" width="6" height="6.5" fill="#4169f0" rx="2"/>
<rect x="415" y="539" width="8" height="6.5" fill="#4169f0" rx="2"/>
<rect x="390.4" y="570.9" width="6" height="6.1" fill="#4169f0" rx="2"/>
<rect x="415" y="570.9" width="8" height="6.1" fill="#4169f0" rx="2"/>
<path d="M419 573.9 L458 573.9" fill="none" stroke="#4a58d4" stroke-width="5" stroke-linecap="butt" stroke-linejoin="miter"/>
<rect x="456" y="571.9" width="4" height="4" fill="#d8283c"/>
<rect x="457" y="572.9" width="2" height="2" fill="#ffb0a0"/>
<path d="M393.4 573.9 L393.4 591.6 L404.8 599.9 L431.4 599.9" fill="none" stroke="#4a58d4" stroke-width="2" stroke-linecap="butt" stroke-linejoin="miter"/>
<path d="M387 557.2 L426.5 557.2" fill="none" stroke="#d8e8f8" stroke-width="2" stroke-linecap="butt" stroke-linejoin="miter"/>
<rect x="416.6" y="592.6" width="41" height="41.4" fill="none" stroke="#5c9cf0" stroke-width="2"/>
<rect x="431.4" y="592.6" width="12.4" height="16.8" fill="#4169f0"/>
<rect x="417.6" y="621.2" width="12.8" height="12.8" fill="#4169f0"/>
<rect x="443.2" y="621.2" width="12.8" height="12.8" fill="#4169f0"/>
<path d="M430 624 L437.3 614.3 L496.4 614.3" fill="none" stroke="#4a58d4" stroke-width="2" stroke-linecap="butt" stroke-linejoin="miter"/>
<path d="M493.4 600 L493.4 587.3 L520.6 587.3 L520.6 600" fill="none" stroke="#5c9cf0" stroke-width="2" stroke-linecap="butt" stroke-linejoin="miter"/>
<rect x="493.4" y="587.3" width="27.2" height="57.7" fill="none" stroke="#5c9cf0" stroke-width="2"/>
<rect x="496" y="590" width="22" height="52" fill="none" stroke="#50c8d8" stroke-width="1"/>
<rect x="497.4" y="592.6" width="18.7" height="19.7" fill="#4169f0"/>
<rect x="497.4" y="623.1" width="18.7" height="18.9" fill="#4169f0"/>
<text x="507" y="602" font-family='"Liberation Sans", sans-serif' font-size="8" fill="#ffffff" text-anchor="middle" dominant-baseline="central" transform="rotate(-90 507 602)">2L</text>
<text x="507" y="632" font-family='"Liberation Sans", sans-serif' font-size="8" fill="#ffffff" text-anchor="middle" dominant-baseline="central" transform="rotate(-90 507 632)">1L</text>
<path d="M516 633 L529.9 633" fill="none" stroke="#4a58d4" stroke-width="5" stroke-linecap="butt" stroke-linejoin="miter"/>
<rect x="527.9" y="631" width="4" height="4" fill="#d8283c"/>
<rect x="528.9" y="632" width="2" height="2" fill="#ffb0a0"/>
<path d="M480 633 L497.4 633" fill="none" stroke="#4a58d4" stroke-width="5" stroke-linecap="butt" stroke-linejoin="miter"/>
<rect x="374.9" y="628" width="11.8" height="14.43" fill="#4169f0" rx="2"/>
<rect x="374.9" y="650.57" width="11.8" height="14.43" fill="#4169f0" rx="2"/>
<path d="M373.4 635.94 V657.06 M388.2 635.94 V657.06" stroke="#5c9cf0" stroke-width="1" fill="none"/>
<path d="M375.4 639.43 V653.57 M386.2 639.43 V653.57" stroke="#50c8d8" stroke-width="1" fill="none"/>
<path d="M357.6 633 L375 633" fill="none" stroke="#4a58d4" stroke-width="5" stroke-linecap="butt" stroke-linejoin="miter"/>
<rect x="355.6" y="631" width="4" height="4" fill="#d8283c"/>
<rect x="356.6" y="632" width="2" height="2" fill="#ffb0a0"/>
<path d="M380.8 665 L380.8 673" fill="none" stroke="#4a58d4" stroke-width="5" stroke-linecap="butt" stroke-linejoin="miter"/>
<rect x="378.8" y="671" width="4" height="4" fill="#d8283c"/>
<rect x="379.8" y="672" width="2" height="2" fill="#ffb0a0"/>
<rect x="468.5" y="627.8" width="11.6" height="11.7" fill="#4169f0" rx="2"/>
<rect x="468.5" y="646.1" width="11.6" height="11.7" fill="#4169f0" rx="2"/>
<path d="M467 634.23 V651.37 M481.6 634.23 V651.37" stroke="#5c9cf0" stroke-width="1" fill="none"/>
<path d="M469 636.5 V649.1 M479.6 636.5 V649.1" stroke="#50c8d8" stroke-width="1" fill="none"/>
<path d="M474.3 657 L474.3 662" fill="none" stroke="#4a58d4" stroke-width="5" stroke-linecap="butt" stroke-linejoin="miter"/>
<rect x="472.3" y="659.7" width="4" height="4" fill="#d8283c"/>
<rect x="473.3" y="660.7" width="2" height="2" fill="#ffb0a0"/>
<rect x="713.75" y="443.5" width="12" height="10.73" fill="#4169f0" rx="3"/>
<rect x="713.75" y="460.27" width="12" height="10.73" fill="#4169f0" rx="3"/>
<path d="M712.25 448.86 V465.64 M727.25 448.86 V465.64" stroke="#5c9cf0" stroke-width="1" fill="none"/>
<path d="M711.75 441.86 L727.75 457.86 M727.75 441.86 L711.75 457.86" stroke="#c8d8f0" stroke-width="1" fill="none"/>
<rect x="735" y="443.5" width="12" height="10.73" fill="#4169f0" rx="3"/>
<rect x="735" y="460.27" width="12" height="10.73" fill="#4169f0" rx="3"/>
<path d="M733.5 448.86 V465.64 M748.5 448.86 V465.64" stroke="#5c9cf0" stroke-width="1" fill="none"/>
<path d="M733 441.86 L749 457.86 M749 441.86 L733 457.86" stroke="#c8d8f0" stroke-width="1" fill="none"/>
<rect x="758" y="443.5" width="12" height="10.73" fill="#4169f0" rx="3"/>
<rect x="758" y="460.27" width="12" height="10.73" fill="#4169f0" rx="3"/>
<path d="M756.5 448.86 V465.64 M771.5 448.86 V465.64" stroke="#5c9cf0" stroke-width="1" fill="none"/>
<path d="M756 441.86 L772 457.86 M772 441.86 L756 457.86" stroke="#c8d8f0" stroke-width="1" fill="none"/>
<path d="M719.75 466 L741 466 L741 521" fill="none" stroke="#e6e6e6" stroke-width="1" stroke-linecap="butt" stroke-linejoin="miter"/>
<path d="M764 471 L755.25 521" fill="none" stroke="#e6e6e6" stroke-width="1" stroke-linecap="butt" stroke-linejoin="miter"/>
<rect x="832.5" y="443.5" width="12" height="10.73" fill="#4169f0" rx="3"/>
<rect x="832.5" y="460.27" width="12" height="10.73" fill="#4169f0" rx="3"/>
<path d="M831 448.86 V465.64 M846 448.86 V465.64" stroke="#5c9cf0" stroke-width="1" fill="none"/>
<path d="M830.5 441.86 L846.5 457.86 M846.5 441.86 L830.5 457.86" stroke="#c8d8f0" stroke-width="1" fill="none"/>
<rect x="855" y="443.5" width="12" height="10.73" fill="#4169f0" rx="3"/>
<rect x="855" y="460.27" width="12" height="10.73" fill="#4169f0" rx="3"/>
<path d="M853.5 448.86 V465.64 M868.5 448.86 V465.64" stroke="#5c9cf0" stroke-width="1" fill="none"/>
<path d="M853 441.86 L869 457.86 M869 441.86 L853 457.86" stroke="#c8d8f0" stroke-width="1" fill="none"/>
<rect x="877.5" y="443.5" width="12" height="10.73" fill="#4169f0" rx="3"/>
<rect x="877.5" y="460.27" width="12" height="10.73" fill="#4169f0" rx="3"/>
<path d="M876 448.86 V465.64 M891 448.86 V465.64" stroke="#5c9cf0" stroke-width="1" fill="none"/>
<path d="M875.5 441.86 L891.5 457.86 M891.5 441.86 L875.5 457.86" stroke="#c8d8f0" stroke-width="1" fill="none"/>
<path d="M838.5 466 L861 466 L861 521" fill="none" stroke="#e6e6e6" stroke-width="1" stroke-linecap="butt" stroke-linejoin="miter"/>
<path d="M883.5 471 L874.6 524" fill="none" stroke="#e6e6e6" stroke-width="1" stroke-linecap="butt" stroke-linejoin="miter"/>
<path d="M544.5 139 L952 446" fill="none" stroke="#e6e6e6" stroke-width="1" stroke-linecap="butt" stroke-linejoin="miter"/>
<rect x="951.25" y="443.5" width="12" height="11.21" fill="#4169f0" rx="3"/>
<rect x="951.25" y="461.04" width="12" height="11.21" fill="#4169f0" rx="3"/>
<path d="M949.75 449.11 V466.64 M964.75 449.11 V466.64" stroke="#5c9cf0" stroke-width="1" fill="none"/>
<rect x="975" y="443.5" width="12" height="11.21" fill="#4169f0" rx="3"/>
<rect x="975" y="461.04" width="12" height="11.21" fill="#4169f0" rx="3"/>
<path d="M973.5 449.11 V466.64 M988.5 449.11 V466.64" stroke="#5c9cf0" stroke-width="1" fill="none"/>
<path d="M973 442.11 L989 458.11 M989 442.11 L973 458.11" stroke="#c8d8f0" stroke-width="1" fill="none"/>
<rect x="997" y="443.5" width="12" height="11.21" fill="#4169f0" rx="3"/>
<rect x="997" y="461.04" width="12" height="11.21" fill="#4169f0" rx="3"/>
<path d="M995.5 449.11 V466.64 M1010.5 449.11 V466.64" stroke="#5c9cf0" stroke-width="1" fill="none"/>
<path d="M995 442.11 L1011 458.11 M1011 442.11 L995 458.11" stroke="#c8d8f0" stroke-width="1" fill="none"/>
<path d="M957 466 L981 466 L981 526" fill="none" stroke="#e6e6e6" stroke-width="1" stroke-linecap="butt" stroke-linejoin="miter"/>
<path d="M1003 472 L994.75 526" fill="none" stroke="#e6e6e6" stroke-width="1" stroke-linecap="butt" stroke-linejoin="miter"/>
<rect x="576.2" y="513" width="36.8" height="57.3" fill="none" stroke="#50c8d8" stroke-width="1.2"/>
<path d="M576.2 532.7 L614 532.7" fill="none" stroke="#5c9cf0" stroke-width="2" stroke-linecap="butt" stroke-linejoin="miter"/>
<path d="M576.2 549.8 L614 549.8" fill="none" stroke="#5c9cf0" stroke-width="2" stroke-linecap="butt" stroke-linejoin="miter"/>
<rect x="578.8" y="514" width="5" height="8.4" fill="#6f90f0" rx="2.5"/>
<rect x="578.8" y="561" width="5" height="8.5" fill="#6f90f0" rx="2.5"/>
<rect x="589.1" y="514" width="5" height="8.4" fill="#6f90f0" rx="2.5"/>
<rect x="589.1" y="561" width="5" height="8.5" fill="#6f90f0" rx="2.5"/>
<rect x="597.7" y="514" width="5" height="8.4" fill="#6f90f0" rx="2.5"/>
<rect x="597.7" y="561" width="5" height="8.5" fill="#6f90f0" rx="2.5"/>
<rect x="605.7" y="514" width="5" height="8.4" fill="#6f90f0" rx="2.5"/>
<rect x="605.7" y="561" width="5" height="8.5" fill="#6f90f0" rx="2.5"/>
<path d="M577.3 514 L585.3 522 M585.3 514 L577.3 522" stroke="#c8d8f0" stroke-width="1" fill="none"/>
<path d="M577.3 561 L585.3 569 M585.3 561 L577.3 569" stroke="#c8d8f0" stroke-width="1" fill="none"/>
<path d="M604.2 514 L612.2 522 M612.2 514 L604.2 522" stroke="#c8d8f0" stroke-width="1" fill="none"/>
<path d="M604.2 561 L612.2 569 M612.2 561 L604.2 569" stroke="#c8d8f0" stroke-width="1" fill="none"/>
<rect x="647.6" y="513" width="36.8" height="57.3" fill="none" stroke="#50c8d8" stroke-width="1.2"/>
<path d="M647.6 532.7 L685.4 532.7" fill="none" stroke="#5c9cf0" stroke-width="2" stroke-linecap="butt" stroke-linejoin="miter"/>
<path d="M647.6 549.8 L685.4 549.8" fill="none" stroke="#5c9cf0" stroke-width="2" stroke-linecap="butt" stroke-linejoin="miter"/>
<rect x="650.2" y="514" width="5" height="8.4" fill="#6f90f0" rx="2.5"/>
<rect x="650.2" y="561" width="5" height="8.5" fill="#6f90f0" rx="2.5"/>
<rect x="660.5" y="514" width="5" height="8.4" fill="#6f90f0" rx="2.5"/>
<rect x="660.5" y="561" width="5" height="8.5" fill="#6f90f0" rx="2.5"/>
<rect x="669.1" y="514" width="5" height="8.4" fill="#6f90f0" rx="2.5"/>
<rect x="669.1" y="561" width="5" height="8.5" fill="#6f90f0" rx="2.5"/>
<rect x="677.1" y="514" width="5" height="8.4" fill="#6f90f0" rx="2.5"/>
<rect x="677.1" y="561" width="5" height="8.5" fill="#6f90f0" rx="2.5"/>
<path d="M648.7 514 L656.7 522 M656.7 514 L648.7 522" stroke="#c8d8f0" stroke-width="1" fill="none"/>
<path d="M648.7 561 L656.7 569 M656.7 561 L648.7 569" stroke="#c8d8f0" stroke-width="1" fill="none"/>
<path d="M675.6 514 L683.6 522 M683.6 514 L675.6 522" stroke="#c8d8f0" stroke-width="1" fill="none"/>
<path d="M675.6 561 L683.6 569 M683.6 561 L675.6 569" stroke="#c8d8f0" stroke-width="1" fill="none"/>
<path d="M593 567 L705 628" fill="none" stroke="#e6e6e6" stroke-width="1" stroke-linecap="butt" stroke-linejoin="miter"/>
<path d="M664 567 L733 628" fill="none" stroke="#e6e6e6" stroke-width="1" stroke-linecap="butt" stroke-linejoin="miter"/>
<rect x="722.8" y="520" width="36.1" height="40.8" fill="none" stroke="#50c8d8" stroke-width="1.2"/>
<path d="M720.8 540.2 L761.9 540.2" fill="none" stroke="#5c9cf0" stroke-width="2.5" stroke-linecap="butt" stroke-linejoin="miter"/>
<rect x="724.85" y="521" width="6" height="8" fill="#7a98e8"/>
<path d="M722.85 520 L732.85 530 M732.85 520 L722.85 530" stroke="#c8d8f0" stroke-width="1" fill="none"/>
<rect x="737.85" y="521" width="6" height="8" fill="#4169f0" rx="3"/>
<rect x="750.85" y="521" width="6" height="8" fill="#4169f0" rx="3"/>
<rect x="724.85" y="552" width="6" height="8" fill="#4169f0" rx="2"/>
<rect x="737.85" y="552" width="6" height="8" fill="#7a98e8"/>
<path d="M735.85 551 L745.85 561 M745.85 551 L735.85 561" stroke="#c8d8f0" stroke-width="1" fill="none"/>
<rect x="750.85" y="552" width="6" height="8" fill="#4169f0" rx="3"/>
<rect x="842.8" y="520" width="37.2" height="40.8" fill="none" stroke="#50c8d8" stroke-width="1.2"/>
<path d="M840.8 540.2 L883 540.2" fill="none" stroke="#5c9cf0" stroke-width="2.5" stroke-linecap="butt" stroke-linejoin="miter"/>
<rect x="845.01" y="521" width="6" height="8" fill="#7a98e8"/>
<path d="M843.01 520 L853.01 530 M853.01 520 L843.01 530" stroke="#c8d8f0" stroke-width="1" fill="none"/>
<rect x="858.4" y="521" width="6" height="8" fill="#4169f0" rx="3"/>
<rect x="871.79" y="521" width="6" height="8" fill="#4169f0" rx="3"/>
<rect x="845.01" y="552" width="6" height="8" fill="#4169f0" rx="2"/>
<rect x="858.4" y="552" width="6" height="8" fill="#7a98e8"/>
<path d="M856.4 551 L866.4 561 M866.4 551 L856.4 561" stroke="#c8d8f0" stroke-width="1" fill="none"/>
<rect x="871.79" y="552" width="6" height="8" fill="#4169f0" rx="3"/>
<rect x="963.5" y="520" width="35" height="40.8" fill="none" stroke="#50c8d8" stroke-width="1.2"/>
<path d="M961.5 540.2 L1001.5 540.2" fill="none" stroke="#5c9cf0" stroke-width="2.5" stroke-linecap="butt" stroke-linejoin="miter"/>
<rect x="965.4" y="521" width="6" height="8" fill="#7a98e8"/>
<path d="M963.4 520 L973.4 530 M973.4 520 L963.4 530" stroke="#c8d8f0" stroke-width="1" fill="none"/>
<rect x="978" y="521" width="6" height="8" fill="#4169f0" rx="3"/>
<rect x="990.6" y="521" width="6" height="8" fill="#4169f0" rx="3"/>
<rect x="965.4" y="552" width="6" height="8" fill="#4169f0" rx="2"/>
<rect x="978" y="552" width="6" height="8" fill="#7a98e8"/>
<path d="M976 551 L986 561 M986 551 L976 561" stroke="#c8d8f0" stroke-width="1" fill="none"/>
<rect x="990.6" y="552" width="6" height="8" fill="#4169f0" rx="3"/>
<rect x="781" y="508.4" width="27.4" height="59.1" fill="none" stroke="#5c9cf0" stroke-width="2"/>
<rect x="784" y="511" width="21.5" height="54" fill="none" stroke="#5c9cf0" stroke-width="1"/>
<rect x="786" y="512.8" width="17.5" height="20.4" fill="#4169f0"/>
<rect x="786" y="541.9" width="17.5" height="21.8" fill="#4169f0"/>
<text x="795" y="523" font-family='"Liberation Sans", sans-serif' font-size="8" fill="#ffffff" text-anchor="middle" dominant-baseline="central" transform="rotate(-60 795 523)">2L</text>
<text x="795" y="553" font-family='"Liberation Sans", sans-serif' font-size="8" fill="#ffffff" text-anchor="middle" dominant-baseline="central" transform="rotate(-90 795 553)">1L</text>
<path d="M754 557 L794.7 524.4 L880 641 L895 660" fill="none" stroke="#e6e6e6" stroke-width="1" stroke-linecap="butt" stroke-linejoin="miter"/>
<path d="M794.7 555 L847.1 556.4" fill="none" stroke="#e6e6e6" stroke-width="1" stroke-linecap="butt" stroke-linejoin="miter"/>
<path d="M870 556 Q915 548 962 554 L967 560" fill="none" stroke="#e6e6e6" stroke-width="1"/>
<rect x="721.5" y="568.5" width="12.5" height="12.09" fill="#4169f0" rx="3"/>
<rect x="721.5" y="587.41" width="12.5" height="12.09" fill="#4169f0" rx="3"/>
<path d="M720 574.54 V593.46 M735.5 574.54 V593.46" stroke="#5c9cf0" stroke-width="1" fill="none"/>
<path d="M719.75 584.46 L735.75 600.46 M735.75 584.46 L719.75 600.46" stroke="#c8d8f0" stroke-width="1" fill="none"/>
<path d="M727.75 560 L727.75 575" fill="none" stroke="#e6e6e6" stroke-width="1" stroke-linecap="butt" stroke-linejoin="miter"/>
<rect x="841.55" y="568.5" width="12.5" height="12.09" fill="#4169f0" rx="3"/>
<rect x="841.55" y="587.41" width="12.5" height="12.09" fill="#4169f0" rx="3"/>
<path d="M840.05 574.54 V593.46 M855.55 574.54 V593.46" stroke="#5c9cf0" stroke-width="1" fill="none"/>
<path d="M839.8 584.46 L855.8 600.46 M855.8 584.46 L839.8 600.46" stroke="#c8d8f0" stroke-width="1" fill="none"/>
<path d="M847.8 560 L847.8 575" fill="none" stroke="#e6e6e6" stroke-width="1" stroke-linecap="butt" stroke-linejoin="miter"/>
<rect x="961.75" y="568.5" width="12.5" height="12.09" fill="#4169f0" rx="3"/>
<rect x="961.75" y="587.41" width="12.5" height="12.09" fill="#4169f0" rx="3"/>
<path d="M960.25 574.54 V593.46 M975.75 574.54 V593.46" stroke="#5c9cf0" stroke-width="1" fill="none"/>
<path d="M960 584.46 L976 600.46 M976 584.46 L960 600.46" stroke="#c8d8f0" stroke-width="1" fill="none"/>
<path d="M968 560 L968 575" fill="none" stroke="#e6e6e6" stroke-width="1" stroke-linecap="butt" stroke-linejoin="miter"/>
<rect x="667.2" y="623.4" width="77.5" height="90.3" fill="none" stroke="#50c8d8" stroke-width="1.2"/>
<rect x="670.1" y="648.2" width="72.8" height="39.3" fill="none" stroke="#5c9cf0" stroke-width="2.2"/>
<rect x="672.8" y="623.4" width="5.2" height="13.1" fill="#4169f0" rx="2.5"/>
<rect x="672.8" y="697.6" width="5.2" height="16.1" fill="#4169f0" rx="2.5"/>
<rect x="682.1" y="623.4" width="5.2" height="13.1" fill="#4169f0" rx="2.5"/>
<rect x="682.1" y="697.6" width="5.2" height="16.1" fill="#4169f0" rx="2.5"/>
<rect x="691.1" y="623.4" width="5.2" height="13.1" fill="#4169f0" rx="2.5"/>
<rect x="691.1" y="697.6" width="5.2" height="16.1" fill="#4169f0" rx="2.5"/>
<rect x="699.8" y="623.4" width="5.2" height="13.1" fill="#4169f0" rx="2.5"/>
<rect x="699.8" y="697.6" width="5.2" height="16.1" fill="#4169f0" rx="2.5"/>
<rect x="709.2" y="623.4" width="5.2" height="13.1" fill="#4169f0" rx="2.5"/>
<rect x="709.2" y="697.6" width="5.2" height="16.1" fill="#4169f0" rx="2.5"/>
<rect x="717.9" y="623.4" width="5.2" height="13.1" fill="#4169f0" rx="2.5"/>
<rect x="717.9" y="697.6" width="5.2" height="16.1" fill="#4169f0" rx="2.5"/>
<rect x="726.6" y="623.4" width="5.2" height="13.1" fill="#4169f0" rx="2.5"/>
<rect x="726.6" y="697.6" width="5.2" height="16.1" fill="#4169f0" rx="2.5"/>
<rect x="735.4" y="623.4" width="5.2" height="13.1" fill="#4169f0" rx="2.5"/>
<rect x="735.4" y="697.6" width="5.2" height="16.1" fill="#4169f0" rx="2.5"/>
<path d="M680.7 626 L688.7 634 M688.7 626 L680.7 634" stroke="#c8d8f0" stroke-width="1" fill="none"/>
<path d="M689.7 626 L697.7 634 M697.7 626 L689.7 634" stroke="#c8d8f0" stroke-width="1" fill="none"/>
<path d="M671.4 701 L679.4 709 M679.4 701 L671.4 709" stroke="#c8d8f0" stroke-width="1" fill="none"/>
<rect x="620.5" y="655.4" width="12" height="11.93" fill="#4169f0" rx="3"/>
<rect x="620.5" y="674.07" width="12" height="11.93" fill="#4169f0" rx="3"/>
<path d="M619 661.37 V680.03 M634 661.37 V680.03" stroke="#5c9cf0" stroke-width="1" fill="none"/>
<path d="M618.5 671.03 L634.5 687.03 M634.5 671.03 L618.5 687.03" stroke="#c8d8f0" stroke-width="1" fill="none"/>
<rect x="642.3" y="655.4" width="12" height="11.93" fill="#4169f0" rx="3"/>
<rect x="642.3" y="674.07" width="12" height="11.93" fill="#4169f0" rx="3"/>
<path d="M640.8 661.37 V680.03 M655.8 661.37 V680.03" stroke="#5c9cf0" stroke-width="1" fill="none"/>
<path d="M640.3 671.03 L656.3 687.03 M656.3 671.03 L640.3 687.03" stroke="#c8d8f0" stroke-width="1" fill="none"/>
<path d="M628 661 L702 627" fill="none" stroke="#e6e6e6" stroke-width="1" stroke-linecap="butt" stroke-linejoin="miter"/>
<path d="M650 661 L680 630" fill="none" stroke="#e6e6e6" stroke-width="1" stroke-linecap="butt" stroke-linejoin="miter"/>
<path d="M702 627 L730 705" fill="none" stroke="#e6e6e6" stroke-width="1" stroke-linecap="butt" stroke-linejoin="miter"/>
<rect x="749.4" y="681.6" width="12" height="11.93" fill="#4169f0" rx="3"/>
<rect x="749.4" y="700.27" width="12" height="11.93" fill="#4169f0" rx="3"/>
<path d="M747.9 687.57 V706.23 M762.9 687.57 V706.23" stroke="#5c9cf0" stroke-width="1" fill="none"/>
<path d="M747.4 697.23 L763.4 713.23 M763.4 697.23 L747.4 713.23" stroke="#c8d8f0" stroke-width="1" fill="none"/>
<rect x="778" y="681.6" width="12" height="11.93" fill="#4169f0" rx="3"/>
<rect x="778" y="700.27" width="12" height="11.93" fill="#4169f0" rx="3"/>
<path d="M776.5 687.57 V706.23 M791.5 687.57 V706.23" stroke="#5c9cf0" stroke-width="1" fill="none"/>
<rect x="824.5" y="681.6" width="12" height="11.93" fill="#4169f0" rx="3"/>
<rect x="824.5" y="700.27" width="12" height="11.93" fill="#4169f0" rx="3"/>
<path d="M823 687.57 V706.23 M838 687.57 V706.23" stroke="#5c9cf0" stroke-width="1" fill="none"/>
<rect x="806.2" y="681.6" width="12" height="11.93" fill="#ffffff" rx="3"/>
<rect x="806.2" y="700.27" width="12" height="11.93" fill="#ffffff" rx="3"/>
<path d="M804.7 687.57 V706.23 M819.7 687.57 V706.23" stroke="#e070c0" stroke-width="1" fill="none"/>
<path d="M804.2 697.23 L820.2 713.23 M820.2 697.23 L804.2 713.23" stroke="#c8d8f0" stroke-width="1" fill="none"/>
<rect x="705.8" y="707.8" width="12" height="11.39" fill="#ffffff" rx="3"/>
<rect x="705.8" y="725.61" width="12" height="11.39" fill="#ffffff" rx="3"/>
<path d="M704.3 713.49 V731.31 M719.3 713.49 V731.31" stroke="#e070c0" stroke-width="1" fill="none"/>
<path d="M703.8 706.49 L719.8 722.49 M719.8 706.49 L703.8 722.49" stroke="#c8d8f0" stroke-width="1" fill="none"/>
<path d="M703.8 722.31 L719.8 738.31 M719.8 722.31 L703.8 738.31" stroke="#c8d8f0" stroke-width="1" fill="none"/>
<rect x="728.5" y="707.8" width="12" height="11.39" fill="#ffffff" rx="3"/>
<rect x="728.5" y="725.61" width="12" height="11.39" fill="#ffffff" rx="3"/>
<path d="M727 713.49 V731.31 M742 713.49 V731.31" stroke="#e070c0" stroke-width="1" fill="none"/>
<path d="M726.5 706.49 L742.5 722.49 M742.5 706.49 L726.5 722.49" stroke="#c8d8f0" stroke-width="1" fill="none"/>
<path d="M726.5 722.31 L742.5 738.31 M742.5 722.31 L726.5 738.31" stroke="#c8d8f0" stroke-width="1" fill="none"/>
<path d="M680 705 L830 695" fill="none" stroke="#e6e6e6" stroke-width="1" stroke-linecap="butt" stroke-linejoin="miter"/>
<path d="M700 705 L784 690" fill="none" stroke="#e6e6e6" stroke-width="1" stroke-linecap="butt" stroke-linejoin="miter"/>
<path d="M705 705 L812 688" fill="none" stroke="#e6e6e6" stroke-width="1" stroke-linecap="butt" stroke-linejoin="miter"/>
<path d="M690 705 L830 705" fill="none" stroke="#e6e6e6" stroke-width="1" stroke-linecap="butt" stroke-linejoin="miter"/>
<path d="M730 700 L755 688" fill="none" stroke="#e6e6e6" stroke-width="1" stroke-linecap="butt" stroke-linejoin="miter"/>
<path d="M740 705 L812 705" fill="none" stroke="#e6e6e6" stroke-width="1" stroke-linecap="butt" stroke-linejoin="miter"/>
<path d="M733 700 L774.75 792" fill="none" stroke="#e6e6e6" stroke-width="1" stroke-linecap="butt" stroke-linejoin="miter"/>
<path d="M738 700 L812.75 792" fill="none" stroke="#e6e6e6" stroke-width="1" stroke-linecap="butt" stroke-linejoin="miter"/>
<rect x="889.5" y="638.5" width="12" height="11.21" fill="#4169f0" rx="3"/>
<rect x="889.5" y="656.04" width="12" height="11.21" fill="#4169f0" rx="3"/>
<path d="M888 644.11 V661.64 M903 644.11 V661.64" stroke="#5c9cf0" stroke-width="1" fill="none"/>
<path d="M887.5 637.11 L903.5 653.11 M903.5 637.11 L887.5 653.11" stroke="#c8d8f0" stroke-width="1" fill="none"/>
<rect x="912" y="638.5" width="12" height="11.21" fill="#4169f0" rx="3"/>
<rect x="912" y="656.04" width="12" height="11.21" fill="#4169f0" rx="3"/>
<path d="M910.5 644.11 V661.64 M925.5 644.11 V661.64" stroke="#5c9cf0" stroke-width="1" fill="none"/>
<path d="M910 637.11 L926 653.11 M926 637.11 L910 653.11" stroke="#c8d8f0" stroke-width="1" fill="none"/>
<rect x="934.5" y="638.5" width="12" height="11.21" fill="#4169f0" rx="3"/>
<rect x="934.5" y="656.04" width="12" height="11.21" fill="#4169f0" rx="3"/>
<path d="M933 644.11 V661.64 M948 644.11 V661.64" stroke="#5c9cf0" stroke-width="1" fill="none"/>
<path d="M895 661 L940 661" fill="none" stroke="#e6e6e6" stroke-width="1" stroke-linecap="butt" stroke-linejoin="miter"/>
<path d="M942.25 644.75 L1037.25 702.25 L1040 728 L1037 800" fill="none" stroke="#e6e6e6" stroke-width="1" stroke-linecap="butt" stroke-linejoin="miter"/>
<rect x="1019.25" y="684.75" width="70" height="34.25" fill="none" stroke="#5c9cf0" stroke-width="2.2"/>
<rect x="1026" y="692.5" width="35" height="20" fill="none" stroke="#50c8d8" stroke-width="1"/>
<circle cx="1037.25" cy="702.25" r="10" fill="#9a0a3c"/>
<circle cx="1037.25" cy="702.25" r="6.5" fill="#ff9c00"/>
<rect x="1061" y="692" width="20.75" height="20" fill="#9a0a3c"/>
<circle cx="1071.5" cy="702" r="6.5" fill="#ff9c00"/>
<text x="1037" y="702" font-family='"Liberation Sans", sans-serif' font-size="7" fill="#ffffff" text-anchor="middle" dominant-baseline="central">2L</text>
<text x="1071" y="702" font-family='"Liberation Sans", sans-serif' font-size="7" fill="#ffffff" text-anchor="middle" dominant-baseline="central">1L</text>
<rect x="34.5" y="645.25" width="60" height="18.25" fill="none" stroke="#50c8d8" stroke-width="1.2"/>
<path d="M47.5 640 Q64.5 624 81.25 640" fill="none" stroke="#5c9cf0" stroke-width="2"/>
<path d="M47.5 668 Q64.5 684 81.25 668" fill="none" stroke="#5c9cf0" stroke-width="2"/>
<circle cx="43.75" cy="653.5" r="8" fill="#9a0a3c"/>
<rect x="39.5" y="649.5" width="8.5" height="8" fill="#ff9c00" rx="2"/>
<circle cx="85.75" cy="653.5" r="8" fill="#9a0a3c"/>
<rect x="81.5" y="649.5" width="8.5" height="8" fill="#ff9c00" rx="2"/>
<path d="M37 660 L29.5 671 L29.5 694" fill="none" stroke="#4a58d4" stroke-width="2" stroke-linecap="butt" stroke-linejoin="miter"/>
<path d="M92 660 L97.5 671 L97.5 694" fill="none" stroke="#4a58d4" stroke-width="2" stroke-linecap="butt" stroke-linejoin="miter"/>
<path d="M3 676 L3 694" fill="none" stroke="#5c9cf0" stroke-width="1.5" stroke-linecap="butt" stroke-linejoin="miter"/>
<rect x="22.5" y="690.5" width="83" height="67" fill="none" stroke="#50c8d8" stroke-width="1.2"/>
<rect x="48.75" y="688.5" width="30.75" height="69.5" fill="none" stroke="#5c9cf0" stroke-width="2"/>
<path d="M60 689 L64 693 L68 689" fill="none" stroke="#5c9cf0" stroke-width="1.5" stroke-linecap="butt" stroke-linejoin="miter"/>
<rect x="22.5" y="694.25" width="15" height="7" fill="#4169f0"/>
<rect x="91.25" y="694.25" width="13.75" height="7" fill="#4169f0" rx="3.5"/>
<rect x="22.5" y="711.75" width="15" height="7" fill="#4169f0" rx="3.5"/>
<rect x="91.25" y="711.75" width="13.75" height="7" fill="#4169f0" rx="3.5"/>
<rect x="22.5" y="728.75" width="15" height="7" fill="#4169f0" rx="3.5"/>
<rect x="91.25" y="728.75" width="13.75" height="7" fill="#4169f0" rx="3.5"/>
<rect x="22.5" y="745.25" width="15" height="7" fill="#4169f0" rx="3.5"/>
<rect x="91.25" y="745.25" width="13.75" height="7" fill="#4169f0" rx="3.5"/>
<path d="M105 732.25 L140 732.25" fill="none" stroke="#4a58d4" stroke-width="5" stroke-linecap="butt" stroke-linejoin="miter"/>
<rect x="138" y="730.25" width="4" height="4" fill="#d8283c"/>
<rect x="139" y="731.25" width="2" height="2" fill="#ffb0a0"/>
<path d="M30 748 L30 765.5" fill="none" stroke="#4a58d4" stroke-width="4" stroke-linecap="butt" stroke-linejoin="miter"/>
<rect x="28" y="763.5" width="4" height="4" fill="#d8283c"/>
<rect x="29" y="764.5" width="2" height="2" fill="#ffb0a0"/>
<path d="M22 733.5 L12.5 739.25 L12.5 812" fill="none" stroke="#4a58d4" stroke-width="2" stroke-linecap="butt" stroke-linejoin="miter"/>
<rect x="7" y="811.75" width="12.5" height="11.21" fill="#4169f0" rx="2"/>
<rect x="7" y="829.29" width="12.5" height="11.21" fill="#4169f0" rx="2"/>
<path d="M5.5 817.92 V834.33 M21 817.92 V834.33" stroke="#5c9cf0" stroke-width="1" fill="none"/>
<path d="M7.5 819.96 V832.29 M19 819.96 V832.29" stroke="#50c8d8" stroke-width="1" fill="none"/>
<rect x="29.52" y="811.75" width="11.75" height="11.21" fill="#4169f0" rx="2"/>
<rect x="29.52" y="829.29" width="11.75" height="11.21" fill="#4169f0" rx="2"/>
<path d="M28.02 817.92 V834.33 M42.77 817.92 V834.33" stroke="#5c9cf0" stroke-width="1" fill="none"/>
<path d="M30.02 819.96 V832.29 M40.77 819.96 V832.29" stroke="#50c8d8" stroke-width="1" fill="none"/>
<path d="M13 840 L13 848 L5 854 L-4 854" fill="none" stroke="#4169f0" stroke-width="8" stroke-linecap="butt" stroke-linejoin="round"/>
<path d="M41 817 L59 817" fill="none" stroke="#4a58d4" stroke-width="2" stroke-linecap="butt" stroke-linejoin="miter"/>
<path d="M41 835 L86.25 835 L97.5 822.5 L97.5 748.75" fill="none" stroke="#4a58d4" stroke-width="2" stroke-linecap="butt" stroke-linejoin="miter"/>
<path d="M240 901 V785 H256 V802.5 H293 V785 H309.5 V901 Z" fill="none" stroke="#5c9cf0" stroke-width="2"/>
<path d="M240 802.5 L309.5 802.5" fill="none" stroke="#5c9cf0" stroke-width="1.5" stroke-linecap="butt" stroke-linejoin="miter"/>
<rect x="260.75" y="702" width="26.75" height="166" fill="none" stroke="#50c8d8" stroke-width="1.2"/>
<circle cx="274.5" cy="715.5" r="12.5" fill="#9a0a3c"/>
<circle cx="274.5" cy="715.5" r="7.5" fill="#ff9c00"/>
<text x="274.5" y="716" font-family='"Liberation Sans", sans-serif' font-size="7" fill="#ffffff" text-anchor="middle" dominant-baseline="central">5L</text>
<circle cx="274.5" cy="750.5" r="12.5" fill="#9a0a3c"/>
<circle cx="274.5" cy="750.5" r="7.5" fill="#ff9c00"/>
<text x="274.5" y="751" font-family='"Liberation Sans", sans-serif' font-size="7" fill="#ffffff" text-anchor="middle" dominant-baseline="central">2L</text>
<circle cx="274.5" cy="785" r="12.5" fill="#9a0a3c"/>
<circle cx="274.5" cy="785" r="7.5" fill="#ff9c00"/>
<text x="274.5" y="785.5" font-family='"Liberation Sans", sans-serif' font-size="7" fill="#ffffff" text-anchor="middle" dominant-baseline="central">1L</text>
<circle cx="274.5" cy="854" r="12.5" fill="#9a0a3c"/>
<circle cx="274.5" cy="854" r="7.5" fill="#ff9c00"/>
<text x="274.5" y="854.5" font-family='"Liberation Sans", sans-serif' font-size="7" fill="#ffffff" text-anchor="middle" dominant-baseline="central">N1</text>
<path d="M287 750 L292 750" fill="none" stroke="#5c9cf0" stroke-width="2" stroke-linecap="butt" stroke-linejoin="miter"/>
<path d="M249 901 L249 927" fill="none" stroke="#5c9cf0" stroke-width="2" stroke-linecap="butt" stroke-linejoin="miter"/>
<path d="M301 901 L301 927" fill="none" stroke="#5c9cf0" stroke-width="2" stroke-linecap="butt" stroke-linejoin="miter"/>
<rect x="329.52" y="708.5" width="13.75" height="11.12" fill="#4169f0" rx="2"/>
<rect x="329.52" y="725.88" width="13.75" height="11.12" fill="#4169f0" rx="2"/>
<path d="M328.02 714.61 V730.89 M344.77 714.61 V730.89" stroke="#5c9cf0" stroke-width="1" fill="none"/>
<path d="M330.02 716.62 V728.88 M342.77 716.62 V728.88" stroke="#50c8d8" stroke-width="1" fill="none"/>
<path d="M337 698 L417 698" fill="none" stroke="#e6e6e6" stroke-width="1" stroke-linecap="butt" stroke-linejoin="miter"/>
<rect x="335.5" y="696.5" width="3" height="3" fill="#d8283c"/>
<rect x="336" y="697" width="2" height="2" fill="#ffb0a0"/>
<path d="M337 737 L328.25 749.25 L287 749.25" fill="none" stroke="#4a58d4" stroke-width="2" stroke-linecap="butt" stroke-linejoin="miter"/>
<path d="M422.5 698.5 L476.5 698.5" fill="none" stroke="#4a58d4" stroke-width="6" stroke-linecap="butt" stroke-linejoin="miter"/>
<path d="M422.5 716 L476.5 716" fill="none" stroke="#4a58d4" stroke-width="4" stroke-linecap="butt" stroke-linejoin="miter"/>
<path d="M450.75 636 L450.75 663.5 L462 672.25 L498.25 672.25 L508.25 683.5 L508.25 693" fill="none" stroke="#4a58d4" stroke-width="2" stroke-linecap="butt" stroke-linejoin="miter"/>
<path d="M484.5 716 L499.5 698 L507 698" fill="none" stroke="#4a58d4" stroke-width="2" stroke-linecap="butt" stroke-linejoin="miter"/>
<rect x="417" y="693" width="11" height="11.41" fill="#4169f0" rx="2"/>
<rect x="417" y="710.84" width="11" height="11.41" fill="#4169f0" rx="2"/>
<path d="M415.5 699.27 V715.98 M429.5 699.27 V715.98" stroke="#5c9cf0" stroke-width="1" fill="none"/>
<path d="M417.5 701.41 V713.84 M427.5 701.41 V713.84" stroke="#50c8d8" stroke-width="1" fill="none"/>
<rect x="438.25" y="693" width="13.5" height="11.41" fill="#4169f0" rx="2"/>
<rect x="438.25" y="710.84" width="13.5" height="11.41" fill="#4169f0" rx="2"/>
<path d="M436.75 699.27 V715.98 M453.25 699.27 V715.98" stroke="#5c9cf0" stroke-width="1" fill="none"/>
<path d="M438.75 701.41 V713.84 M451.25 701.41 V713.84" stroke="#50c8d8" stroke-width="1" fill="none"/>
<rect x="470.5" y="693" width="12" height="11.41" fill="#4169f0" rx="2"/>
<rect x="470.5" y="710.84" width="12" height="11.41" fill="#4169f0" rx="2"/>
<path d="M469 699.27 V715.98 M484 699.27 V715.98" stroke="#5c9cf0" stroke-width="1" fill="none"/>
<path d="M471 701.41 V713.84 M482 701.41 V713.84" stroke="#50c8d8" stroke-width="1" fill="none"/>
<rect x="501.5" y="693" width="12" height="11.41" fill="#4169f0" rx="2"/>
<rect x="501.5" y="710.84" width="12" height="11.41" fill="#4169f0" rx="2"/>
<path d="M500 699.27 V715.98 M515 699.27 V715.98" stroke="#5c9cf0" stroke-width="1" fill="none"/>
<path d="M502 701.41 V713.84 M513 701.41 V713.84" stroke="#50c8d8" stroke-width="1" fill="none"/>
<path d="M477 683.5 L477 693" fill="none" stroke="#4a58d4" stroke-width="4" stroke-linecap="butt" stroke-linejoin="miter"/>
<rect x="475" y="681.5" width="4" height="4" fill="#d8283c"/>
<rect x="476" y="682.5" width="2" height="2" fill="#ffb0a0"/>
<path d="M507.5 722 L507.5 733.5" fill="none" stroke="#4a58d4" stroke-width="4" stroke-linecap="butt" stroke-linejoin="miter"/>
<rect x="505.5" y="731.5" width="4" height="4" fill="#d8283c"/>
<rect x="506.5" y="732.5" width="2" height="2" fill="#ffb0a0"/>
<path d="M422 722 L422 735.5 L408.25 746.75 L408.25 756" fill="none" stroke="#4a58d4" stroke-width="2" stroke-linecap="butt" stroke-linejoin="miter"/>
<path d="M407.75 756.75 L407.75 767" fill="none" stroke="#4a58d4" stroke-width="2" stroke-linecap="butt" stroke-linejoin="miter"/>
<rect x="405.75" y="754.75" width="4" height="4" fill="#d8283c"/>
<rect x="406.75" y="755.75" width="2" height="2" fill="#ffb0a0"/>
<path d="M418.75 756.75 L418.75 767" fill="none" stroke="#4a58d4" stroke-width="2" stroke-linecap="butt" stroke-linejoin="miter"/>
<rect x="416.75" y="754.75" width="4" height="4" fill="#d8283c"/>
<rect x="417.75" y="755.75" width="2" height="2" fill="#ffb0a0"/>
<path d="M429.75 756.75 L429.75 767" fill="none" stroke="#4a58d4" stroke-width="2" stroke-linecap="butt" stroke-linejoin="miter"/>
<rect x="427.75" y="754.75" width="4" height="4" fill="#d8283c"/>
<rect x="428.75" y="755.75" width="2" height="2" fill="#ffb0a0"/>
<path d="M440 756.75 L440 767" fill="none" stroke="#4a58d4" stroke-width="2" stroke-linecap="butt" stroke-linejoin="miter"/>
<rect x="438" y="754.75" width="4" height="4" fill="#d8283c"/>
<rect x="439" y="755.75" width="2" height="2" fill="#ffb0a0"/>
<rect x="338.5" y="765" width="5" height="137" fill="#3ca8f8"/>
<rect x="508.5" y="765" width="5" height="137" fill="#3ca8f8"/>
<rect x="341" y="766.5" width="170" height="134" fill="none" stroke="#3ca8f8" stroke-width="3"/>
<path d="M343 893 L509 893" fill="none" stroke="#50c8d8" stroke-width="1.2" stroke-linecap="butt" stroke-linejoin="miter"/>
<path d="M341 902 L511 902" fill="none" stroke="#8aa0a0" stroke-width="2" stroke-linecap="butt" stroke-linejoin="miter"/>
<rect x="355" y="766.75" width="27.75" height="45.75" fill="#4169f0" rx="2"/>
<rect x="354" y="853" width="29" height="34.5" fill="#4169f0" rx="2"/>
<rect x="475" y="767" width="28.25" height="45.5" fill="#4169f0" rx="2"/>
<rect x="475" y="853" width="28" height="34.5" fill="#4169f0" rx="2"/>
<text x="369" y="789.5" font-family='"Liberation Sans", sans-serif' font-size="11" fill="#ffffff" text-anchor="middle" dominant-baseline="central" transform="rotate(90 369 789.5)">9L</text>
<text x="369" y="870" font-family='"Liberation Sans", sans-serif' font-size="11" fill="#ffffff" text-anchor="middle" dominant-baseline="central" transform="rotate(90 369 870)">6L</text>
<text x="489" y="789.5" font-family='"Liberation Sans", sans-serif' font-size="11" fill="#ffffff" text-anchor="middle" dominant-baseline="central" transform="rotate(90 489 789.5)">8L</text>
<text x="489" y="870" font-family='"Liberation Sans", sans-serif' font-size="11" fill="#ffffff" text-anchor="middle" dominant-baseline="central" transform="rotate(90 489 870)">7L</text>
<path d="M369 812 L369 853" fill="none" stroke="#4a58d4" stroke-width="5.5" stroke-linecap="butt" stroke-linejoin="miter"/>
<path d="M490 812 L490 853" fill="none" stroke="#4a58d4" stroke-width="5.5" stroke-linecap="butt" stroke-linejoin="miter"/>
<path d="M383 870 L475 870" fill="none" stroke="#4a58d4" stroke-width="6" stroke-linecap="butt" stroke-linejoin="miter"/>
<path d="M454 787.5 L475 787.5" fill="none" stroke="#4a58d4" stroke-width="6" stroke-linecap="butt" stroke-linejoin="miter"/>
<rect x="402.75" y="766.75" width="8" height="43.25" fill="#4169f0" rx="2"/>
<text x="406.75" y="788" font-family='"Liberation Sans", sans-serif' font-size="7" fill="#ffffff" text-anchor="middle" dominant-baseline="central" transform="rotate(90 406.75 788)">1L</text>
<rect x="414" y="766.75" width="8" height="43.25" fill="#4169f0" rx="2"/>
<text x="418" y="788" font-family='"Liberation Sans", sans-serif' font-size="7" fill="#ffffff" text-anchor="middle" dominant-baseline="central" transform="rotate(90 418 788)">2L</text>
<rect x="425" y="766.75" width="8" height="43.25" fill="#4169f0" rx="2"/>
<text x="429" y="788" font-family='"Liberation Sans", sans-serif' font-size="7" fill="#ffffff" text-anchor="middle" dominant-baseline="central" transform="rotate(90 429 788)">3L</text>
<rect x="436.25" y="766.75" width="7.75" height="43.25" fill="#4169f0" rx="2"/>
<text x="440.12" y="788" font-family='"Liberation Sans", sans-serif' font-size="7" fill="#ffffff" text-anchor="middle" dominant-baseline="central" transform="rotate(90 440.12 788)">4L</text>
<rect x="447" y="766.75" width="7.5" height="43.25" fill="#4169f0" rx="2"/>
<text x="450.75" y="788" font-family='"Liberation Sans", sans-serif' font-size="7" fill="#ffffff" text-anchor="middle" dominant-baseline="central" transform="rotate(90 450.75 788)">5L</text>
<path d="M503 773.75 L523.25 773.75" fill="none" stroke="#4a58d4" stroke-width="5" stroke-linecap="butt" stroke-linejoin="miter"/>
<rect x="521.25" y="771.75" width="4" height="4" fill="#d8283c"/>
<rect x="522.25" y="772.75" width="2" height="2" fill="#ffb0a0"/>
<path d="M503 788.75 L523.25 788.75" fill="none" stroke="#4a58d4" stroke-width="5" stroke-linecap="butt" stroke-linejoin="miter"/>
<rect x="521.25" y="786.75" width="4" height="4" fill="#d8283c"/>
<rect x="522.25" y="787.75" width="2" height="2" fill="#ffb0a0"/>
<path d="M503 804.75 L523.25 804.75" fill="none" stroke="#4a58d4" stroke-width="5" stroke-linecap="butt" stroke-linejoin="miter"/>
<rect x="521.25" y="802.75" width="4" height="4" fill="#d8283c"/>
<rect x="522.25" y="803.75" width="2" height="2" fill="#ffb0a0"/>
<path d="M545.5 746 L1088.5 746" fill="none" stroke="#5c9a3c" stroke-width="1" stroke-linecap="butt" stroke-linejoin="miter"/>
<rect x="565.75" y="772.5" width="418.25" height="126.5" fill="none" stroke="#5c9cf0" stroke-width="2.2"/>
<path d="M680 772 L680 899" fill="none" stroke="#5c9cf0" stroke-width="2.2" stroke-linecap="butt" stroke-linejoin="miter"/>
<path d="M870 772 L870 899" fill="none" stroke="#5c9cf0" stroke-width="2.2" stroke-linecap="butt" stroke-linejoin="miter"/>
<path d="M984 899 L984 927" fill="none" stroke="#5c9cf0" stroke-width="2.2" stroke-linecap="butt" stroke-linejoin="miter"/>
<path d="M565.75 899 L565.75 927" fill="none" stroke="#5c9cf0" stroke-width="2.2" stroke-linecap="butt" stroke-linejoin="miter"/>
<path d="M594 780.5 L956 780.5" fill="none" stroke="#50c8d8" stroke-width="1.2" stroke-linecap="butt" stroke-linejoin="miter"/>
<path d="M594 842.5 L956 842.5" fill="none" stroke="#50c8d8" stroke-width="1.2" stroke-linecap="butt" stroke-linejoin="miter"/>
<circle cx="605" cy="811" r="32" fill="#9a0a3c"/>
<circle cx="605" cy="811" r="21.5" fill="#ff9c00"/>
<text x="605" y="811.5" font-family='"Liberation Sans", sans-serif' font-size="11" fill="#ffffff" text-anchor="middle" dominant-baseline="central">11L</text>
<circle cx="944.75" cy="811" r="31.5" fill="#9a0a3c"/>
<circle cx="944.75" cy="811" r="21.75" fill="#ff9c00"/>
<text x="944.75" y="811.5" font-family='"Liberation Sans", sans-serif' font-size="11" fill="#ffffff" text-anchor="middle" dominant-baseline="central">10L</text>
<path d="M768 746 L774.75 752 L774.75 812 L763 824 L756 830 L793.5 830" fill="none" stroke="#4a58d4" stroke-width="3" stroke-linecap="butt" stroke-linejoin="miter"/>
<path d="M812.75 746 L812.75 792" fill="none" stroke="#4a58d4" stroke-width="3" stroke-linecap="butt" stroke-linejoin="miter"/>
<circle cx="699.75" cy="792.25" r="11" fill="#9a0a3c"/>
<circle cx="699.75" cy="792.25" r="7" fill="#ff9c00"/>
<text x="699.75" y="792.75" font-family='"Liberation Sans", sans-serif' font-size="7" fill="#ffffff" text-anchor="middle" dominant-baseline="central">5L</text>
<circle cx="737.75" cy="792.25" r="11" fill="#9a0a3c"/>
<circle cx="737.75" cy="792.25" r="7" fill="#ff9c00"/>
<text x="737.75" y="792.75" font-family='"Liberation Sans", sans-serif' font-size="7" fill="#ffffff" text-anchor="middle" dominant-baseline="central">4L</text>
<circle cx="774.75" cy="792.25" r="11" fill="#9a0a3c"/>
<circle cx="774.75" cy="792.25" r="7" fill="#ff9c00"/>
<text x="774.75" y="792.75" font-family='"Liberation Sans", sans-serif' font-size="7" fill="#ffffff" text-anchor="middle" dominant-baseline="central">3L</text>
<circle cx="812.75" cy="792.25" r="11" fill="#9a0a3c"/>
<circle cx="812.75" cy="792.25" r="7" fill="#ff9c00"/>
<text x="812.75" y="792.75" font-family='"Liberation Sans", sans-serif' font-size="7" fill="#ffffff" text-anchor="middle" dominant-baseline="central">2L</text>
<rect x="838" y="780.25" width="23.5" height="23.5" fill="#9a0a3c"/>
<circle cx="849.75" cy="792" r="7" fill="#ff9c00"/>
<text x="849.75" y="792.5" font-family='"Liberation Sans", sans-serif' font-size="7" fill="#ffffff" text-anchor="middle" dominant-baseline="central">1L</text>
<circle cx="719" cy="830" r="11" fill="#9a0a3c"/>
<circle cx="719" cy="830" r="7" fill="#ff9c00"/>
<text x="719" y="830.5" font-family='"Liberation Sans", sans-serif' font-size="7" fill="#ffffff" text-anchor="middle" dominant-baseline="central">9L</text>
<circle cx="756" cy="830" r="11" fill="#9a0a3c"/>
<circle cx="756" cy="830" r="7" fill="#ff9c00"/>
<text x="756" y="830.5" font-family='"Liberation Sans", sans-serif' font-size="7" fill="#ffffff" text-anchor="middle" dominant-baseline="central">8L</text>
<circle cx="793.5" cy="830" r="11" fill="#9a0a3c"/>
<circle cx="793.5" cy="830" r="7" fill="#ff9c00"/>
<text x="793.5" y="830.5" font-family='"Liberation Sans", sans-serif' font-size="7" fill="#ffffff" text-anchor="middle" dominant-baseline="central">7L</text>
<circle cx="831.5" cy="830" r="11" fill="#9a0a3c"/>
<circle cx="831.5" cy="830" r="7" fill="#ff9c00"/>
<text x="831.5" y="830.5" font-family='"Liberation Sans", sans-serif' font-size="7" fill="#ffffff" text-anchor="middle" dominant-baseline="central">6L</text>
<rect x="1019.25" y="779.75" width="36.25" height="117.5" fill="none" stroke="#5c9cf0" stroke-width="2.2"/>
<rect x="1024.5" y="816.75" width="25.5" height="68.75" fill="none" stroke="#50c8d8" stroke-width="1.2"/>
<rect x="1024.25" y="791" width="25.5" height="25.75" fill="#9a0a3c"/>
<circle cx="1037" cy="804" r="6.5" fill="#ff9c00"/>
<text x="1037" y="804" font-family='"Liberation Sans", sans-serif' font-size="7" fill="#ffffff" text-anchor="middle" dominant-baseline="central">1L</text>
<circle cx="1036.5" cy="872.5" r="11.5" fill="#9a0a3c"/>
<circle cx="1036.5" cy="872.5" r="7" fill="#ff9c00"/>
<text x="1036.5" y="873" font-family='"Liberation Sans", sans-serif' font-size="7" fill="#ffffff" text-anchor="middle" dominant-baseline="central">2L</text>
<path d="M1037 745 L1037 791" fill="none" stroke="#4a58d4" stroke-width="3" stroke-linecap="butt" stroke-linejoin="miter"/>
<circle cx="1037" cy="773" r="3" fill="#4a7ef0"/>
<rect x="517" y="513" width="133.7" height="20.5" fill="#808080" fill-opacity="0.45"/>
<text x="517.5" y="531" font-family='"Liberation Sans", sans-serif' font-size="21" fill="#4e1a1a" textLength="133" lengthAdjust="spacingAndGlyphs">EDA365.COM</text>
<text x="38" y="214" font-family='"Liberation Mono", monospace' font-size="7.5" fill="#9eb2f0" text-anchor="middle" textLength="8.6" lengthAdjust="spacingAndGlyphs">S9</text>
<text x="275" y="147" font-family='"Liberation Mono", monospace' font-size="7.5" fill="#9eb2f0" text-anchor="middle" textLength="12.9" lengthAdjust="spacingAndGlyphs">R13</text>
<text x="50" y="332" font-family='"Liberation Mono", monospace' font-size="7.5" fill="#9eb2f0" text-anchor="middle" textLength="12.9" lengthAdjust="spacingAndGlyphs">C90</text>
<text x="86" y="332" font-family='"Liberation Mono", monospace' font-size="7.5" fill="#9eb2f0" text-anchor="middle" textLength="12.9" lengthAdjust="spacingAndGlyphs">C91</text>
<text x="44" y="417" font-family='"Liberation Mono", monospace' font-size="7.5" fill="#9eb2f0" text-anchor="middle" textLength="12.9" lengthAdjust="spacingAndGlyphs">C38</text>
<text x="78" y="417" font-family='"Liberation Mono", monospace' font-size="7.5" fill="#9eb2f0" text-anchor="middle" textLength="12.9" lengthAdjust="spacingAndGlyphs">C39</text>
<text x="28" y="478" font-family='"Liberation Mono", monospace' font-size="7.5" fill="#9eb2f0" text-anchor="middle" textLength="12.9" lengthAdjust="spacingAndGlyphs">R82</text>
<text x="318" y="147" font-family='"Liberation Mono", monospace' font-size="7.5" fill="#9eb2f0" text-anchor="middle" textLength="17.2" lengthAdjust="spacingAndGlyphs">R132</text>
<text x="364.5" y="171" font-family='"Liberation Mono", monospace' font-size="7.5" fill="#9eb2f0" text-anchor="middle" textLength="17.2" lengthAdjust="spacingAndGlyphs">C112</text>
<text x="424.5" y="165" font-family='"Liberation Mono", monospace' font-size="7.5" fill="#9eb2f0" text-anchor="middle" textLength="17.2" lengthAdjust="spacingAndGlyphs">R134</text>
<text x="409.5" y="213" font-family='"Liberation Mono", monospace' font-size="7.5" fill="#9eb2f0" text-anchor="middle" textLength="17.2" lengthAdjust="spacingAndGlyphs">C113</text>
<text x="463.25" y="212" font-family='"Liberation Mono", monospace' font-size="7.5" fill="#9eb2f0" text-anchor="middle" textLength="17.2" lengthAdjust="spacingAndGlyphs">R133</text>
<text x="480" y="162" font-family='"Liberation Mono", monospace' font-size="7.5" fill="#9eb2f0" text-anchor="middle" textLength="12.9" lengthAdjust="spacingAndGlyphs">U54</text>
<text x="539.5" y="169" font-family='"Liberation Mono", monospace' font-size="7.5" fill="#9eb2f0" text-anchor="middle" textLength="17.2" lengthAdjust="spacingAndGlyphs">R130</text>
<text x="531" y="243" font-family='"Liberation Mono", monospace' font-size="7.5" fill="#9eb2f0" text-anchor="middle" textLength="8.6" lengthAdjust="spacingAndGlyphs">D3</text>
<text x="648" y="156" font-family='"Liberation Mono", monospace' font-size="7.5" fill="#9eb2f0" text-anchor="middle" textLength="17.2" lengthAdjust="spacingAndGlyphs">R138</text>
<text x="592" y="202" font-family='"Liberation Mono", monospace' font-size="7.5" fill="#9eb2f0" text-anchor="middle" textLength="17.2" lengthAdjust="spacingAndGlyphs">C116</text>
<text x="689" y="156" font-family='"Liberation Mono", monospace' font-size="7.5" fill="#9eb2f0" text-anchor="middle" textLength="17.2" lengthAdjust="spacingAndGlyphs">R139</text>
<text x="728" y="156" font-family='"Liberation Mono", monospace' font-size="7.5" fill="#9eb2f0" text-anchor="middle" textLength="17.2" lengthAdjust="spacingAndGlyphs">C128</text>
<text x="773" y="156" font-family='"Liberation Mono", monospace' font-size="7.5" fill="#9eb2f0" text-anchor="middle" textLength="17.2" lengthAdjust="spacingAndGlyphs">C127</text>
<text x="686.5" y="213" font-family='"Liberation Mono", monospace' font-size="7.5" fill="#9eb2f0" text-anchor="middle" textLength="17.2" lengthAdjust="spacingAndGlyphs">C126</text>
<text x="728" y="212" font-family='"Liberation Mono", monospace' font-size="7.5" fill="#9eb2f0" text-anchor="middle" textLength="17.2" lengthAdjust="spacingAndGlyphs">R131</text>
<text x="719" y="262" font-family='"Liberation Mono", monospace' font-size="7.5" fill="#9eb2f0" text-anchor="middle" textLength="17.2" lengthAdjust="spacingAndGlyphs">R136</text>
<text x="760" y="262" font-family='"Liberation Mono", monospace' font-size="7.5" fill="#9eb2f0" text-anchor="middle" textLength="17.2" lengthAdjust="spacingAndGlyphs">C114</text>
<text x="685.5" y="325" font-family='"Liberation Mono", monospace' font-size="7.5" fill="#9eb2f0" text-anchor="middle" textLength="17.2" lengthAdjust="spacingAndGlyphs">C118</text>
<text x="731.5" y="325" font-family='"Liberation Mono", monospace' font-size="7.5" fill="#9eb2f0" text-anchor="middle" textLength="17.2" lengthAdjust="spacingAndGlyphs">R137</text>
<text x="809" y="287" font-family='"Liberation Mono", monospace' font-size="7.5" fill="#9eb2f0" text-anchor="middle" textLength="12.9" lengthAdjust="spacingAndGlyphs" transform="rotate(90 809 287)">LS2</text>
<text x="821.5" y="164" font-family='"Liberation Mono", monospace' font-size="7.5" fill="#9eb2f0" text-anchor="middle" textLength="12.9" lengthAdjust="spacingAndGlyphs">U50</text>
<text x="878" y="161" font-family='"Liberation Mono", monospace' font-size="7.5" fill="#9eb2f0" text-anchor="middle" textLength="17.2" lengthAdjust="spacingAndGlyphs">R142</text>
<text x="921" y="159" font-family='"Liberation Mono", monospace' font-size="7.5" fill="#9eb2f0" text-anchor="middle" textLength="17.2" lengthAdjust="spacingAndGlyphs">C123</text>
<text x="881.5" y="270" font-family='"Liberation Mono", monospace' font-size="7.5" fill="#9eb2f0" text-anchor="middle" textLength="17.2" lengthAdjust="spacingAndGlyphs">R135</text>
<text x="966" y="158" font-family='"Liberation Mono", monospace' font-size="7.5" fill="#9eb2f0" text-anchor="middle" textLength="12.9" lengthAdjust="spacingAndGlyphs">L47</text>
<text x="935" y="299" font-family='"Liberation Mono", monospace' font-size="7.5" fill="#9eb2f0" text-anchor="middle" textLength="17.2" lengthAdjust="spacingAndGlyphs">C122</text>
<text x="986" y="218" font-family='"Liberation Mono", monospace' font-size="7.5" fill="#9eb2f0" text-anchor="middle" textLength="17.2" lengthAdjust="spacingAndGlyphs">C121</text>
<text x="1014" y="287" font-family='"Liberation Mono", monospace' font-size="7.5" fill="#9eb2f0" text-anchor="middle" textLength="17.2" lengthAdjust="spacingAndGlyphs">C120</text>
<text x="205" y="459" font-family='"Liberation Mono", monospace' font-size="7.5" fill="#9eb2f0" text-anchor="middle" textLength="12.9" lengthAdjust="spacingAndGlyphs">U16</text>
<text x="430.4" y="478" font-family='"Liberation Mono", monospace' font-size="7.5" fill="#9eb2f0" text-anchor="middle" textLength="12.9" lengthAdjust="spacingAndGlyphs">R52</text>
<text x="469" y="478" font-family='"Liberation Mono", monospace' font-size="7.5" fill="#9eb2f0" text-anchor="middle" textLength="12.9" lengthAdjust="spacingAndGlyphs">R51</text>
<text x="399" y="536" font-family='"Liberation Mono", monospace' font-size="7.5" fill="#9eb2f0" text-anchor="middle" textLength="12.9" lengthAdjust="spacingAndGlyphs">U15</text>
<text x="442" y="587" font-family='"Liberation Mono", monospace' font-size="7.5" fill="#9eb2f0" text-anchor="middle" textLength="8.6" lengthAdjust="spacingAndGlyphs">D1</text>
<text x="499.4" y="584" font-family='"Liberation Mono", monospace' font-size="7.5" fill="#9eb2f0" text-anchor="middle" textLength="8.6" lengthAdjust="spacingAndGlyphs">D1</text>
<text x="372.3" y="619" font-family='"Liberation Mono", monospace' font-size="7.5" fill="#9eb2f0" text-anchor="middle" textLength="12.9" lengthAdjust="spacingAndGlyphs">C18</text>
<text x="474.7" y="618" font-family='"Liberation Mono", monospace' font-size="7.5" fill="#9eb2f0" text-anchor="middle" textLength="12.9" lengthAdjust="spacingAndGlyphs">C19</text>
<text x="703" y="431.5" font-family='"Liberation Mono", monospace' font-size="7.5" fill="#9eb2f0" text-anchor="middle" textLength="17.2" lengthAdjust="spacingAndGlyphs">R120</text>
<text x="744" y="431.5" font-family='"Liberation Mono", monospace' font-size="7.5" fill="#9eb2f0" text-anchor="middle" textLength="17.2" lengthAdjust="spacingAndGlyphs">R124</text>
<text x="784" y="431.5" font-family='"Liberation Mono", monospace' font-size="7.5" fill="#9eb2f0" text-anchor="middle" textLength="12.9" lengthAdjust="spacingAndGlyphs">C96</text>
<text x="821.5" y="432.5" font-family='"Liberation Mono", monospace' font-size="7.5" fill="#9eb2f0" text-anchor="middle" textLength="17.2" lengthAdjust="spacingAndGlyphs">R115</text>
<text x="864" y="432.5" font-family='"Liberation Mono", monospace' font-size="7.5" fill="#9eb2f0" text-anchor="middle" textLength="17.2" lengthAdjust="spacingAndGlyphs">R116</text>
<text x="905" y="431.5" font-family='"Liberation Mono", monospace' font-size="7.5" fill="#9eb2f0" text-anchor="middle" textLength="12.9" lengthAdjust="spacingAndGlyphs">C94</text>
<text x="942" y="434" font-family='"Liberation Mono", monospace' font-size="7.5" fill="#9eb2f0" text-anchor="middle" textLength="17.2" lengthAdjust="spacingAndGlyphs">R106</text>
<text x="986" y="434" font-family='"Liberation Mono", monospace' font-size="7.5" fill="#9eb2f0" text-anchor="middle" textLength="17.2" lengthAdjust="spacingAndGlyphs">R108</text>
<text x="1026" y="434" font-family='"Liberation Mono", monospace' font-size="7.5" fill="#9eb2f0" text-anchor="middle" textLength="12.9" lengthAdjust="spacingAndGlyphs">C79</text>
<text x="601" y="506" font-family='"Liberation Mono", monospace' font-size="7.5" fill="#9eb2f0" text-anchor="middle" textLength="12.9" lengthAdjust="spacingAndGlyphs">U10</text>
<text x="668" y="510" font-family='"Liberation Mono", monospace' font-size="7.5" fill="#9eb2f0" text-anchor="middle" textLength="8.6" lengthAdjust="spacingAndGlyphs">U9</text>
<text x="731" y="515" font-family='"Liberation Mono", monospace' font-size="7.5" fill="#9eb2f0" text-anchor="middle" textLength="12.9" lengthAdjust="spacingAndGlyphs">U53</text>
<text x="860" y="515" font-family='"Liberation Mono", monospace' font-size="7.5" fill="#9eb2f0" text-anchor="middle" textLength="12.9" lengthAdjust="spacingAndGlyphs">U52</text>
<text x="972" y="517.5" font-family='"Liberation Mono", monospace' font-size="7.5" fill="#9eb2f0" text-anchor="middle" textLength="12.9" lengthAdjust="spacingAndGlyphs">U51</text>
<text x="795" y="503" font-family='"Liberation Mono", monospace' font-size="7.5" fill="#9eb2f0" text-anchor="middle" textLength="8.6" lengthAdjust="spacingAndGlyphs">D5</text>
<text x="714" y="588" font-family='"Liberation Mono", monospace' font-size="7.5" fill="#9eb2f0" text-anchor="middle" textLength="17.2" lengthAdjust="spacingAndGlyphs" transform="rotate(-90 714 588)">R118</text>
<text x="834" y="588" font-family='"Liberation Mono", monospace' font-size="7.5" fill="#9eb2f0" text-anchor="middle" textLength="17.2" lengthAdjust="spacingAndGlyphs" transform="rotate(-90 834 588)">R119</text>
<text x="953.5" y="588" font-family='"Liberation Mono", monospace' font-size="7.5" fill="#9eb2f0" text-anchor="middle" textLength="17.2" lengthAdjust="spacingAndGlyphs" transform="rotate(-90 953.5 588)">R105</text>
<text x="752.5" y="645" font-family='"Liberation Mono", monospace' font-size="7.5" fill="#9eb2f0" text-anchor="middle" textLength="12.9" lengthAdjust="spacingAndGlyphs">U13</text>
<text x="615.7" y="649.5" font-family='"Liberation Mono", monospace' font-size="7.5" fill="#9eb2f0" text-anchor="middle" textLength="12.9" lengthAdjust="spacingAndGlyphs">R48</text>
<text x="649.2" y="649.5" font-family='"Liberation Mono", monospace' font-size="7.5" fill="#9eb2f0" text-anchor="middle" textLength="12.9" lengthAdjust="spacingAndGlyphs">R47</text>
<text x="752.5" y="674" font-family='"Liberation Mono", monospace' font-size="7.5" fill="#9eb2f0" text-anchor="middle" textLength="12.9" lengthAdjust="spacingAndGlyphs">C14</text>
<text x="784" y="674" font-family='"Liberation Mono", monospace' font-size="7.5" fill="#9eb2f0" text-anchor="middle" textLength="12.9" lengthAdjust="spacingAndGlyphs">C13</text>
<text x="844.2" y="692" font-family='"Liberation Mono", monospace' font-size="7.5" fill="#9eb2f0" text-anchor="middle" textLength="12.9" lengthAdjust="spacingAndGlyphs" transform="rotate(90 844.2 692)">C12</text>
<text x="880" y="631.5" font-family='"Liberation Mono", monospace' font-size="7.5" fill="#9eb2f0" text-anchor="middle" textLength="17.2" lengthAdjust="spacingAndGlyphs">R117</text>
<text x="916" y="630.5" font-family='"Liberation Mono", monospace' font-size="7.5" fill="#9eb2f0" text-anchor="middle" textLength="17.2" lengthAdjust="spacingAndGlyphs">C119</text>
<text x="955.5" y="631.5" font-family='"Liberation Mono", monospace' font-size="7.5" fill="#9eb2f0" text-anchor="middle" textLength="17.2" lengthAdjust="spacingAndGlyphs">R172</text>
<text x="1049" y="680" font-family='"Liberation Mono", monospace' font-size="7.5" fill="#9eb2f0" text-anchor="middle" textLength="12.9" lengthAdjust="spacingAndGlyphs">J18</text>
<text x="105" y="644" font-family='"Liberation Mono", monospace' font-size="7.5" fill="#9eb2f0" text-anchor="middle" textLength="8.6" lengthAdjust="spacingAndGlyphs">Y1</text>
<text x="5" y="657" font-family='"Liberation Mono", monospace' font-size="7.5" fill="#9eb2f0" text-anchor="middle" textLength="8.6" lengthAdjust="spacingAndGlyphs">B1</text>
<text x="122.5" y="694" font-family='"Liberation Mono", monospace' font-size="7.5" fill="#9eb2f0" text-anchor="middle" textLength="12.9" lengthAdjust="spacingAndGlyphs">U25</text>
<text x="9" y="799.5" font-family='"Liberation Mono", monospace' font-size="7.5" fill="#9eb2f0" text-anchor="middle" textLength="12.9" lengthAdjust="spacingAndGlyphs">C63</text>
<text x="45" y="798.5" font-family='"Liberation Mono", monospace' font-size="7.5" fill="#9eb2f0" text-anchor="middle" textLength="12.9" lengthAdjust="spacingAndGlyphs">R88</text>
<text x="296" y="776" font-family='"Liberation Mono", monospace' font-size="7.5" fill="#9eb2f0" text-anchor="middle" textLength="8.6" lengthAdjust="spacingAndGlyphs">S2</text>
<text x="333" y="704" font-family='"Liberation Mono", monospace' font-size="7.5" fill="#9eb2f0" text-anchor="middle" textLength="12.9" lengthAdjust="spacingAndGlyphs">R55</text>
<text x="408" y="688.5" font-family='"Liberation Mono", monospace' font-size="7.5" fill="#9eb2f0" text-anchor="middle" textLength="12.9" lengthAdjust="spacingAndGlyphs">R54</text>
<text x="444.5" y="687" font-family='"Liberation Mono", monospace' font-size="7.5" fill="#9eb2f0" text-anchor="middle" textLength="12.9" lengthAdjust="spacingAndGlyphs">C20</text>
<text x="479.5" y="685" font-family='"Liberation Mono", monospace' font-size="7.5" fill="#9eb2f0" text-anchor="middle" textLength="12.9" lengthAdjust="spacingAndGlyphs">C21</text>
<text x="513" y="687" font-family='"Liberation Mono", monospace' font-size="7.5" fill="#9eb2f0" text-anchor="middle" textLength="12.9" lengthAdjust="spacingAndGlyphs">C22</text>
<text x="478" y="758.5" font-family='"Liberation Mono", monospace' font-size="7.5" fill="#9eb2f0" text-anchor="middle" textLength="8.6" lengthAdjust="spacingAndGlyphs">P1</text>
<text x="606.5" y="762" font-family='"Liberation Mono", monospace' font-size="7.5" fill="#9eb2f0" text-anchor="middle" textLength="8.6" lengthAdjust="spacingAndGlyphs">J1</text>
<text x="722" y="877" font-family='"Liberation Mono", monospace' font-size="7.5" fill="#9eb2f0" text-anchor="middle" textLength="4.3" lengthAdjust="spacingAndGlyphs">6</text>
<text x="835" y="877" font-family='"Liberation Mono", monospace' font-size="7.5" fill="#9eb2f0" text-anchor="middle" textLength="4.3" lengthAdjust="spacingAndGlyphs">9</text>
<text x="703" y="751" font-family='"Liberation Mono", monospace' font-size="7.5" fill="#9eb2f0" text-anchor="middle" textLength="4.3" lengthAdjust="spacingAndGlyphs">5</text>
<text x="852" y="751" font-family='"Liberation Mono", monospace' font-size="7.5" fill="#9eb2f0" text-anchor="middle" textLength="4.3" lengthAdjust="spacingAndGlyphs">1</text>
<text x="1049" y="775" font-family='"Liberation Mono", monospace' font-size="7.5" fill="#9eb2f0" text-anchor="middle" textLength="8.6" lengthAdjust="spacingAndGlyphs">S6</text>
</svg>
<rect x="0" y="927" width="1168" height="121" fill="#ffffff"/>
<rect x="0" y="927" width="1168" height="45" fill="#f0f0f0"/>
<rect x="0" y="932" width="1168" height="1" fill="#8a8a8a"/>
<rect x="-6" y="933" width="159" height="27" fill="#eeeeee"/>
<rect x="-6" y="933" width="1" height="27" fill="#ffffff"/>
<rect x="151" y="933" width="2" height="27" fill="#7a7a7a"/>
<rect x="-6" y="958" width="159" height="2" fill="#7a7a7a"/>
<text x="73.5" y="952" font-family='"Liberation Sans", sans-serif' font-size="11.5" fill="#a0a0a0" text-anchor="middle">2 Fanout</text>
<rect x="155" y="933" width="158" height="27" fill="#eeeeee"/>
<rect x="155" y="933" width="1" height="27" fill="#ffffff"/>
<rect x="311" y="933" width="2" height="27" fill="#7a7a7a"/>
<rect x="155" y="958" width="158" height="2" fill="#7a7a7a"/>
<text x="234.0" y="952" font-family='"Liberation Sans", sans-serif' font-size="11.5" fill="#000" text-anchor="middle">3 Plow / Multi</text>
<rect x="315" y="933" width="158" height="27" fill="#eeeeee"/>
<rect x="315" y="933" width="1" height="27" fill="#ffffff"/>
<rect x="471" y="933" width="2" height="27" fill="#7a7a7a"/>
<rect x="315" y="958" width="158" height="2" fill="#7a7a7a"/>
<text x="394.0" y="952" font-family='"Liberation Sans", sans-serif' font-size="11.5" fill="#000" text-anchor="middle">4 Toggle Gloss</text>
<rect x="475" y="933" width="158" height="27" fill="#eeeeee"/>
<rect x="475" y="933" width="1" height="27" fill="#ffffff"/>
<rect x="631" y="933" width="2" height="27" fill="#7a7a7a"/>
<rect x="475" y="958" width="158" height="2" fill="#7a7a7a"/>
<text x="554.0" y="952" font-family='"Liberation Sans", sans-serif' font-size="11.5" fill="#000" text-anchor="middle">5 Plane Sketch</text>
<rect x="635" y="933" width="158" height="27" fill="#eeeeee"/>
<rect x="635" y="933" width="1" height="27" fill="#ffffff"/>
<rect x="791" y="933" width="2" height="27" fill="#7a7a7a"/>
<rect x="635" y="958" width="158" height="2" fill="#7a7a7a"/>
<text x="714.0" y="952" font-family='"Liberation Sans", sans-serif' font-size="11.5" fill="#a0a0a0" text-anchor="middle">6 Undo</text>
<rect x="795" y="933" width="158" height="27" fill="#eeeeee"/>
<rect x="795" y="933" width="1" height="27" fill="#ffffff"/>
<rect x="951" y="933" width="2" height="27" fill="#7a7a7a"/>
<rect x="795" y="958" width="158" height="2" fill="#7a7a7a"/>
<text x="874.0" y="952" font-family='"Liberation Sans", sans-serif' font-size="11.5" fill="#a0a0a0" text-anchor="middle">7 Tune</text>
<rect x="955" y="933" width="158" height="27" fill="#eeeeee"/>
<rect x="955" y="933" width="1" height="27" fill="#ffffff"/>
<rect x="1111" y="933" width="2" height="27" fill="#7a7a7a"/>
<rect x="955" y="958" width="158" height="2" fill="#7a7a7a"/>
<text x="1034.0" y="952" font-family='"Liberation Sans", sans-serif' font-size="11.5" fill="#a0a0a0" text-anchor="middle">8 Route</text>
<rect x="1115" y="933" width="175" height="27" fill="#eeeeee"/>
<rect x="1115" y="933" width="1" height="27" fill="#ffffff"/>
<rect x="1288" y="933" width="2" height="27" fill="#7a7a7a"/>
<rect x="1115" y="958" width="175" height="2" fill="#7a7a7a"/>
<rect x="0" y="966" width="1168" height="1.5" fill="#7a7a7a"/>
<rect x="0" y="971" width="1168" height="1.5" fill="#7a7a7a"/>
<rect x="0" y="973" width="1168" height="75" fill="#ffffff"/>
<text x="0" y="983" font-family='"Liberation Sans", sans-serif' font-size="9" fill="#000" textLength="611" lengthAdjust="spacingAndGlyphs">s split partitions! Please be aware that the split designs should be Joined prior to editing the Master design to ensure data integrity.</text>
</svg></body></html>
